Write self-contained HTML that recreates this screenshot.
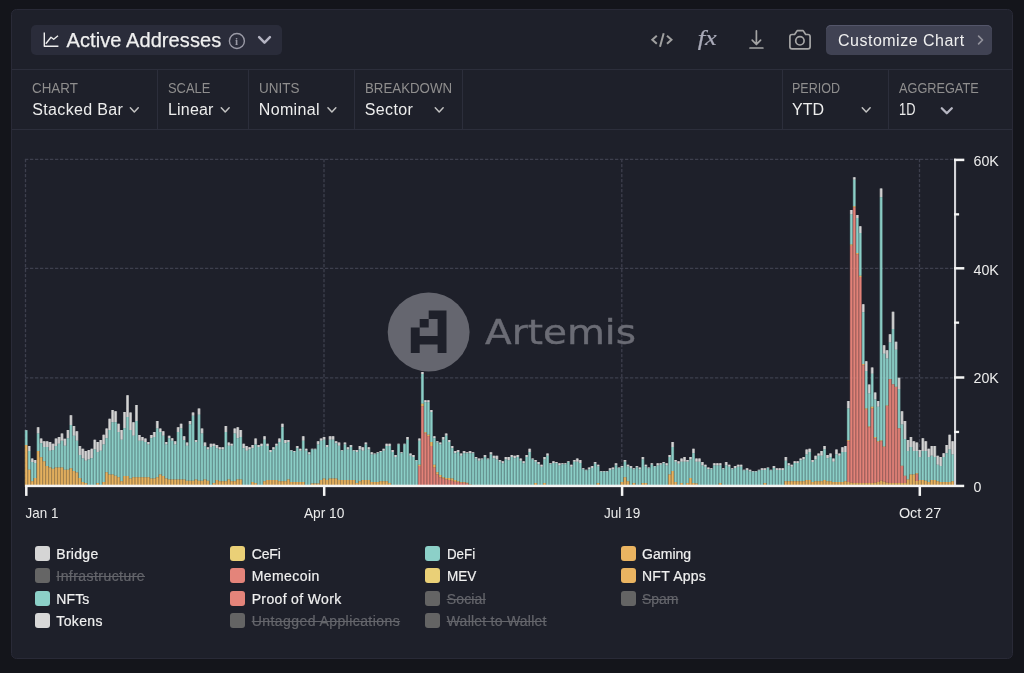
<!DOCTYPE html>
<html lang="en"><head><meta charset="utf-8"><title>Active Addresses</title>
<style>
html,body{margin:0;padding:0}
body{width:1024px;height:673px;overflow:hidden;background:#14151b;font-family:"Liberation Sans",sans-serif;color:#ededed;position:relative}
.root{position:absolute;left:0;top:0;width:1024px;height:673px;will-change:transform;transform:translateZ(0)}
.card{position:absolute;left:10.7px;top:8.9px;width:1002.4px;height:650.1px;background:#1e202a;border:1.8px solid #292a37;border-radius:5.5px;box-sizing:border-box}
.hl{position:absolute;left:12.2px;width:999.4px;height:1px;background:#2c2e3b}
.vl{position:absolute;top:70px;height:59px;width:1px;background:#2c2e3b}
.pill{position:absolute;left:31px;top:25px;width:251px;height:30px;border-radius:5px;background:#2a2c3a}
.title{position:absolute;left:66.5px;top:28.3px;font-size:20px;line-height:24px;white-space:nowrap;color:#f0f0f0;-webkit-text-stroke:0.25px #f0f0f0}
.btn{position:absolute;left:826px;top:24.7px;width:166px;height:30px;border-radius:5px;background:#404253;box-shadow:inset 0 1px 0 #54566a;box-sizing:border-box}
.btnt{position:absolute;left:838px;top:30.5px;font-size:16px;line-height:19px;white-space:nowrap;color:#f0f0f0}
.lab{position:absolute;top:80px;font-size:14px;line-height:16px;color:#8f8e8e;white-space:nowrap}
.val{position:absolute;top:99.5px;font-size:16px;line-height:19px;color:#ededed;white-space:nowrap}
.fx{position:absolute;left:697px;top:26px;font-family:"Liberation Serif",serif;font-style:italic;font-size:22px;line-height:26px;color:#b4b4b4}
svg.chart,svg.icons{position:absolute;left:0;top:0}
.li{position:absolute;height:15px;white-space:nowrap}
.li i{position:absolute;left:0;top:0;width:15px;height:15px;border-radius:3px}
.li>span{position:absolute;left:21.5px;top:0.3px;font-size:14px;line-height:16px;color:#f0f0f0;-webkit-text-stroke:0.2px #f0f0f0}
.li.off>span{color:#64656b;text-decoration:line-through;-webkit-text-stroke:0.2px #64656b}
</style></head><body>
<div class="root">
<div class="card"></div>
<div class="hl" style="top:69px"></div><div class="hl" style="top:129px"></div>
<div class="vl" style="left:157px"></div><div class="vl" style="left:248px"></div><div class="vl" style="left:354px"></div><div class="vl" style="left:462px"></div><div class="vl" style="left:782px"></div><div class="vl" style="left:888px"></div>
<div class="pill"></div>
<div class="title"><span class="fit" style="letter-spacing:0.086px">Active Addresses</span></div>
<div class="btn"></div><div class="btnt"><span class="fit" style="letter-spacing:0.496px">Customize Chart</span></div>
<div class="lab" style="left:32.3px"><span class="fit" style="display:inline-block;transform-origin:0 50%;transform:scaleX(0.9548)">CHART</span></div><div class="val" style="left:32.3px"><span class="fit" style="letter-spacing:0.331px">Stacked Bar</span></div>
<div class="lab" style="left:168.0px"><span class="fit" style="display:inline-block;transform-origin:0 50%;transform:scaleX(0.9211)">SCALE</span></div><div class="val" style="left:168.0px"><span class="fit" style="letter-spacing:0.186px">Linear</span></div>
<div class="lab" style="left:258.8px"><span class="fit" style="display:inline-block;transform-origin:0 50%;transform:scaleX(0.9619)">UNITS</span></div><div class="val" style="left:258.8px"><span class="fit" style="letter-spacing:0.345px">Nominal</span></div>
<div class="lab" style="left:364.8px"><span class="fit" style="display:inline-block;transform-origin:0 50%;transform:scaleX(0.9488)">BREAKDOWN</span></div><div class="val" style="left:364.8px"><span class="fit" style="letter-spacing:0.342px">Sector</span></div>
<div class="lab" style="left:792.0px"><span class="fit" style="display:inline-block;transform-origin:0 50%;transform:scaleX(0.8959)">PERIOD</span></div><div class="val" style="left:792.0px"><span class="fit" style="letter-spacing:-0.033px">YTD</span></div>
<div class="lab" style="left:898.8px"><span class="fit" style="display:inline-block;transform-origin:0 50%;transform:scaleX(0.9092)">AGGREGATE</span></div><div class="val" style="left:898.8px"><span class="fit" style="display:inline-block;transform-origin:0 50%;transform:scaleX(0.8018)">1D</span></div>
<svg class="chart" width="1024" height="673" viewBox="0 0 1024 673">
<g stroke="#3d3f4d" stroke-width="1.3" stroke-dasharray="3.3 1.7" fill="none">
<path d="M25 159.4H955M25 268.4H955M25 377.9H955"/>
<path d="M25.5 159V485M324 159V485M621.8 159V485M919.5 159V485"/>
</g>
<g class="wm">
<ellipse cx="428.65" cy="332" rx="40.95" ry="39.4" fill="#65666f"/>
<path fill="#1e202a" d="M428.7 310.5h17.8v42.5h-8.9v-8.5h-17.9v8.5h-8.9v-25.5h8.9v-8.5h9zM428.7 319v8.500h-9v8.500h17.900v-17z"/>
<text x="485" y="343.8" font-family="DejaVu Sans,sans-serif" font-size="34" fill="#6b6c75" stroke="#6b6c75" stroke-width="0.4" textLength="151" lengthAdjust="spacingAndGlyphs">Artemis</text>
</g>
<g fill-opacity="0.66"><path fill="#d4d4d4" d="M24.75 429.95v0.54h2.98v-0.54zM27.73 446v4.99h2.98v-4.99zM30.71 458.49v3.57h2.98v-3.57zM33.69 459.91v3.03h2.98v-3.03zM36.66 427.27v6.24h2.98v-6.24zM39.64 438.51v4.82h2.98v-4.82zM42.62 441.18v5.71h2.98v-5.71zM45.6 441.18v5.71h2.98v-5.71zM48.58 442.08v8.74h2.98v-8.74zM51.56 443.68v6.24h2.98v-6.24zM54.54 438.51v7.49h2.98v-7.49zM57.52 437.08v6.6h2.98v-6.6zM60.49 433.51v7.14h2.98v-7.14zM63.47 438.87v6.78h2.98v-6.78zM66.45 429.95v8.38h2.98v-8.38zM69.43 415.14v9.81h2.98v-9.81zM72.41 426.02v9.81h2.98v-9.81zM75.39 431.2v9.45h2.98v-9.45zM78.37 446v8.92h2.98v-8.92zM81.35 448.68v9.81h2.98v-9.81zM84.32 451v9.81h2.98v-9.81zM87.3 450.1v9.28h2.98v-9.28zM90.28 448.68v9.45h2.98v-9.45zM93.26 439.76v9.81h2.98v-9.81zM96.24 442.08v9.81h2.98v-9.81zM99.22 440.11v10.7h2.98v-10.7zM102.2 434.76v9.81h2.98v-9.81zM105.17 428.52v9.81h2.98v-9.81zM108.15 418.71v11.24h2.98v-11.24zM111.13 409.97v12.31h2.98v-12.31zM114.11 411.22v11.06h2.98v-11.06zM117.09 423.7v8.38h2.98v-8.38zM120.07 429.95v9.81h2.98v-9.81zM123.05 412.11v16.05h2.98v-16.05zM126.03 395.16v21.94h2.98v-21.94zM129 412.47v17.48h2.98v-17.48zM131.98 422.28v13.56h2.98v-13.56zM134.96 404.97v16.05h2.98v-16.05zM137.94 434.94v5.71h2.98v-5.71zM140.92 437.08v3.57h2.98v-3.57zM143.9 438.51v3.57h2.98v-3.57zM146.88 442.08v2.5h2.98v-2.5zM149.86 434.94v3.39h2.98v-3.39zM152.83 432.09v4.99h2.98v-4.99zM155.81 421.03v7.49h2.98v-7.49zM158.79 428.52v3.57h2.98v-3.57zM161.77 431.2v4.64h2.98v-4.64zM164.75 442.08v2.5h2.98v-2.5zM167.73 435.83v2.5h2.98v-2.5zM170.71 438.33v2.32h2.98v-2.32zM173.69 441.18v3.39h2.98v-3.39zM176.66 427.27v4.82h2.98v-4.82zM179.64 423.7v4.82h2.98v-4.82zM182.62 436.19v3.92h2.98v-3.92zM185.6 442.43v3.21h2.98v-3.21zM188.58 421.03v3.57h2.98v-3.57zM191.56 412.47v3.21h2.98v-3.21zM194.54 440.11v1.96h2.98v-1.96zM197.51 408.54v6.24h2.98v-6.24zM200.49 428.52v4.99h2.98v-4.99zM203.47 442.43v3.57h2.98v-3.57zM206.45 447.25v2.32h2.98v-2.32zM209.43 443.68v3.21h2.98v-3.21zM212.41 443.68v2.32h2.98v-2.32zM215.39 445.11v3.03h2.98v-3.03zM218.37 447.25v2.32h2.98v-2.32zM221.34 447.25v2.32h2.98v-2.32zM224.32 426.02v6.06h2.98v-6.06zM227.3 442.43v3.21h2.98v-3.21zM230.28 443.68v1.96h2.98v-1.96zM233.26 428.52v4.99h2.98v-4.99zM236.24 427.27v11.06h2.98v-11.06zM239.22 429.95v7.14h2.98v-7.14zM242.2 443.68v4.46h2.98v-4.46zM245.17 446v4.82h2.98v-4.82zM248.15 447.25v2.32h2.98v-2.32zM251.13 445.11v3.03h2.98v-3.03zM254.11 438.51v6.06h2.98v-6.06zM257.09 445.11v1.78h2.98v-1.78zM260.07 443.68v2.32h2.98v-2.32zM263.05 436.19v3.57h2.98v-3.57zM266.02 443.68v2.32h2.98v-2.32zM269 450.1v1.78h2.98v-1.78zM271.98 447.25v2.32h2.98v-2.32zM274.96 443.68v1.96h2.98v-1.96zM277.94 438.51v3.57h2.98v-3.57zM280.92 423.7v3.57h2.98v-3.57zM283.9 440.11v3.21h2.98v-3.21zM286.88 440.11v1.96h2.98v-1.96zM289.85 450.1v0.71h2.98v-0.71zM292.83 451v0.89h2.98v-0.89zM295.81 446v2.14h2.98v-2.14zM298.79 448.68v2.14h2.98v-2.14zM301.77 436.19v4.46h2.98v-4.46zM304.75 448.68v2.14h2.98v-2.14zM307.73 452.24v2.14h2.98v-2.14zM310.71 448.68v0.89h2.98v-0.89zM313.68 448.68v0.89h2.98v-0.89zM316.66 441.18v3.39h2.98v-3.39zM319.64 438.51v2.14h2.98v-2.14zM322.62 437.08v2.68h2.98v-2.68zM325.6 445.11v1.78h2.98v-1.78zM328.58 436.19v3.57h2.98v-3.57zM331.56 436.19v3.57h2.98v-3.57zM334.53 441.18v2.14h2.98v-2.14zM337.51 442.43v3.21h2.98v-3.21zM340.49 450.1v0.71h2.98v-0.71zM343.47 442.43v2.14h2.98v-2.14zM346.45 447.25v2.32h2.98v-2.32zM349.43 445.11v1.78h2.98v-1.78zM352.41 450.1v0.71h2.98v-0.71zM355.39 450.1v1.78h2.98v-1.78zM358.36 446v3.57h2.98v-3.57zM361.34 447.25v3.57h2.98v-3.57zM364.32 442.43v2.14h2.98v-2.14zM367.3 447.25v2.32h2.98v-2.32zM370.28 452.24v2.14h2.98v-2.14zM373.26 453.49v0.89h2.98v-0.89zM376.24 452.24v0.89h2.98v-0.89zM379.22 451v0.89h2.98v-0.89zM382.19 448.68v2.14h2.98v-2.14zM385.17 443.68v2.32h2.98v-2.32zM388.15 443.68v2.32h2.98v-2.32zM391.13 450.1v1.78h2.98v-1.78zM394.11 454.92v2.14h2.98v-2.14zM397.09 443.68v0.89h2.98v-0.89zM400.07 452.24v0.89h2.98v-0.89zM403.04 443.68v0.89h2.98v-0.89zM406.02 437.08v2.68h2.98v-2.68zM409 453.49v2.32h2.98v-2.32zM411.98 454.92v2.14h2.98v-2.14zM414.96 459.91v0.89h2.98v-0.89zM417.94 438.51v2.14h2.98v-2.14zM420.92 371.97v2.14h2.98v-2.14zM423.9 400.16v2.14h2.98v-2.14zM426.87 400.16v2.14h2.98v-2.14zM429.85 409.97v2.14h2.98v-2.14zM432.83 436.19v2.14h2.98v-2.14zM435.81 441.18v1.25h2.98v-1.25zM438.79 442.43v2.14h2.98v-2.14zM441.77 437.08v2.68h2.98v-2.68zM444.75 433.51v2.32h2.98v-2.32zM447.73 440.11v1.96h2.98v-1.96zM450.7 446v2.14h2.98v-2.14zM453.68 451v2.14h2.98v-2.14zM456.66 450.1v1.78h2.98v-1.78zM459.64 453.49v2.32h2.98v-2.32zM462.62 451v2.14h2.98v-2.14zM465.6 452.24v0.89h2.98v-0.89zM468.58 451v2.14h2.98v-2.14zM471.56 452.24v0.89h2.98v-0.89zM474.53 457.06v1.43h2.98v-1.43zM477.51 458.49v2.32h2.98v-2.32zM480.49 458.49v0.89h2.98v-0.89zM483.47 454.92v2.14h2.98v-2.14zM486.45 458.49v0.89h2.98v-0.89zM489.43 452.24v2.14h2.98v-2.14zM492.41 455.81v2.32h2.98v-2.32zM495.38 455.81v3.57h2.98v-3.57zM498.36 459.91v1.78h2.98v-1.78zM501.34 461.16v2.14h2.98v-2.14zM504.32 457.06v2.32h2.98v-2.32zM507.3 457.06v3.21h2.98v-3.21zM510.28 454.92v2.14h2.98v-2.14zM513.26 455.81v2.32h2.98v-2.32zM516.24 454.92v2.14h2.98v-2.14zM519.21 458.49v2.32h2.98v-2.32zM522.19 461.16v2.14h2.98v-2.14zM525.17 454.92v2.14h2.98v-2.14zM528.15 448.68v3.21h2.98v-3.21zM531.13 458.49v0.89h2.98v-0.89zM534.11 459.91v1.78h2.98v-1.78zM537.09 462.05v2.14h2.98v-2.14zM540.07 464.73v2.14h2.98v-2.14zM543.04 457.06v2.32h2.98v-2.32zM546.02 453.49v2.32h2.98v-2.32zM549 463.3v0.89h2.98v-0.89zM551.98 461.16v1.78h2.98v-1.78zM554.96 462.05v1.25h2.98v-1.25zM557.94 463.3v2.32h2.98v-2.32zM560.92 463.3v0.89h2.98v-0.89zM563.89 463.3v0.89h2.98v-0.89zM566.87 461.16v0.89h2.98v-0.89zM569.85 464.73v2.14h2.98v-2.14zM572.83 459.91v1.78h2.98v-1.78zM575.81 458.49v3.21h2.98v-3.21zM578.79 459.91v3.03h2.98v-3.03zM581.77 468.3v0.89h2.98v-0.89zM584.75 469.73v0.89h2.98v-0.89zM587.72 467.41v1.78h2.98v-1.78zM590.7 465.98v1.96h2.98v-1.96zM593.68 462.05v1.78h2.98v-1.78zM596.66 464.73v1.78h2.98v-1.78zM599.64 470.97v0.89h2.98v-0.89zM602.62 470.97v0.89h2.98v-0.89zM605.6 470.97v0.89h2.98v-0.89zM608.58 468.3v1.78h2.98v-1.78zM611.55 467.41v1.78h2.98v-1.78zM614.53 463.3v2.32h2.98v-2.32zM617.51 467.41v0.54h2.98v-0.54zM620.49 465.98v1.43h2.98v-1.43zM623.47 459.91v1.78h2.98v-1.78zM626.45 464.73v1.78h2.98v-1.78zM629.43 465.98v1.96h2.98v-1.96zM632.4 468.3v0.89h2.98v-0.89zM635.38 465.98v1.43h2.98v-1.43zM638.36 467.41v1.78h2.98v-1.78zM641.34 457.06v2.32h2.98v-2.32zM644.32 464.73v1.78h2.98v-1.78zM647.3 467.41v0.89h2.98v-0.89zM650.28 463.3v1.43h2.98v-1.43zM653.26 465.98v0.89h2.98v-0.89zM656.23 463.3v2.32h2.98v-2.32zM659.21 463.3v1.43h2.98v-1.43zM662.19 462.05v1.25h2.98v-1.25zM665.17 463.3v2.32h2.98v-2.32zM668.15 454.92v2.14h2.98v-2.14zM671.13 442.08v4.82h2.98v-4.82zM674.11 459.91v1.78h2.98v-1.78zM677.09 461.16v2.68h2.98v-2.68zM680.06 458.49v3.21h2.98v-3.21zM683.04 457.06v4.64h2.98v-4.64zM686.02 459.91v1.78h2.98v-1.78zM689 457.06v2.32h2.98v-2.32zM691.98 448.68v4.46h2.98v-4.46zM694.96 458.49v3.21h2.98v-3.21zM697.94 458.49v3.21h2.98v-3.21zM700.91 462.05v3.57h2.98v-3.57zM703.89 464.73v2.14h2.98v-2.14zM706.87 467.41v1.78h2.98v-1.78zM709.85 468.3v0.89h2.98v-0.89zM712.83 463.3v2.32h2.98v-2.32zM715.81 463.3v2.32h2.98v-2.32zM718.79 463.3v2.32h2.98v-2.32zM721.77 468.3v0.89h2.98v-0.89zM724.74 462.05v3.57h2.98v-3.57zM727.72 464.73v2.14h2.98v-2.14zM730.7 468.3v0.89h2.98v-0.89zM733.68 465.98v1.96h2.98v-1.96zM736.66 464.73v2.14h2.98v-2.14zM739.64 464.73v2.14h2.98v-2.14zM742.62 469.73v0.89h2.98v-0.89zM745.6 468.3v1.78h2.98v-1.78zM748.57 469.73v1.78h2.98v-1.78zM751.55 470.97v0.89h2.98v-0.89zM754.53 470.97v0.89h2.98v-0.89zM757.51 469.73v0.89h2.98v-0.89zM760.49 468.3v1.78h2.98v-1.78zM763.47 468.3v1.78h2.98v-1.78zM766.45 467.41v0.54h2.98v-0.54zM769.42 469.73v0.89h2.98v-0.89zM772.4 465.98v1.96h2.98v-1.96zM775.38 468.3v1.78h2.98v-1.78zM778.36 468.3v1.78h2.98v-1.78zM781.34 468.3v1.78h2.98v-1.78zM784.32 457.06v3.75h2.98v-3.75zM787.3 463.3v2.32h2.98v-2.32zM790.28 464.73v2.14h2.98v-2.14zM793.25 461.16v1.78h2.98v-1.78zM796.23 461.16v1.78h2.98v-1.78zM799.21 458.49v1.78h2.98v-1.78zM802.19 457.06v2.32h2.98v-2.32zM805.17 449.57v4.82h2.98v-4.82zM808.15 448.68v3.21h2.98v-3.21zM811.13 459.91v2.14h2.98v-2.14zM814.11 455.81v3.57h2.98v-3.57zM817.08 453.49v2.32h2.98v-2.32zM820.06 451v4.82h2.98v-4.82zM823.04 446v3.57h2.98v-3.57zM826.02 454.92v3.21h2.98v-3.21zM829 453.49v3.57h2.98v-3.57zM831.98 458.49v3.21h2.98v-3.21zM834.96 449.57v4.82h2.98v-4.82zM837.94 453.49v2.32h2.98v-2.32zM840.91 447.25v4.64h2.98v-4.64zM843.89 446v5.89h2.98v-5.89zM846.87 401v7.5h2.98v-7.5zM849.85 210.1v4.5h2.98v-4.5zM852.83 177.3v2.5h2.98v-2.5zM855.81 215.1v3h2.98v-3zM858.79 226.2v6.7h2.98v-6.7zM861.76 304.2v8.1h2.98v-8.1zM864.74 361.3v9.8h2.98v-9.8zM867.72 384.5v8.9h2.98v-8.9zM870.7 367.6v6.2h2.98v-6.2zM873.68 392.5v7.1h2.98v-7.1zM876.66 401v5.8h2.98v-5.8zM879.64 188.4v8.9h2.98v-8.9zM882.62 345.3v8.4h2.98v-8.4zM885.59 350.3v8.3h2.98v-8.3zM888.57 334.2v8.4h2.98v-8.4zM891.55 311.7v17.2h2.98v-17.2zM894.53 341.7v8h2.98v-8zM897.51 377.7v11.2h2.98v-11.2zM900.49 411.2v13.4h2.98v-13.4zM903.47 421v17.9h2.98v-17.9zM906.45 440.11v10.88h2.98v-10.88zM909.42 437.08v9.81h2.98v-9.81zM912.4 441.18v9.81h2.98v-9.81zM915.38 442.4v8.6h2.98v-8.6zM918.36 450.1v6.96h2.98v-6.96zM921.34 438.33v12.67h2.98v-12.67zM924.32 441.18v9.81h2.98v-9.81zM927.3 448.68v8.38h2.98v-8.38zM930.27 446v9.81h2.98v-9.81zM933.25 446v11.06h2.98v-11.06zM936.23 455.81v8.92h2.98v-8.92zM939.21 457.06v8.92h2.98v-8.92zM942.19 453.14v3.92h2.98v-3.92zM945.17 445.11v8.03h2.98v-8.03zM948.15 434.76v14.81h2.98v-14.81zM951.13 441.18v13.2h2.98v-13.2z"/><path fill="#8bcfc7" d="M24.75 430.48v14.63h2.98v-14.63zM27.73 451v18.73h2.98v-18.73zM30.71 462.05v19.09h2.98v-19.09zM33.69 462.95v15.16h2.98v-15.16zM36.66 433.51v17.48h2.98v-17.48zM39.64 443.33v13.91h2.98v-13.91zM42.62 446.89v14.27h2.98v-14.27zM45.6 446.89v19.09h2.98v-19.09zM48.58 450.82v16.59h2.98v-16.59zM51.56 449.93v18.73h2.98v-18.73zM54.54 446v21.41h2.98v-21.41zM57.52 443.68v23.72h2.98v-23.72zM60.49 440.65v26.76h2.98v-26.76zM63.47 445.64v24.08h2.98v-24.08zM66.45 438.33v31.39h2.98v-31.39zM69.43 424.95v43.35h2.98v-43.35zM72.41 435.83v35.14h2.98v-35.14zM75.39 440.65v31.75h2.98v-31.75zM78.37 454.92v23.19h2.98v-23.19zM81.35 458.49v23.55h2.98v-23.55zM84.32 460.81v22.3h2.98v-22.3zM87.3 459.38v27.65h2.98v-27.65zM90.28 458.13v28.9h2.98v-28.9zM93.26 449.57v37.46h2.98v-37.46zM96.24 451.89v31.22h2.98v-31.22zM99.22 450.82v36.21h2.98v-36.21zM102.2 444.57v37.46h2.98v-37.46zM105.17 438.33v33.89h2.98v-33.89zM108.15 429.95v44.6h2.98v-44.6zM111.13 422.28v52.27h2.98v-52.27zM114.11 422.28v53.51h2.98v-53.51zM117.09 432.09v45.13h2.98v-45.13zM120.07 439.76v41.38h2.98v-41.38zM123.05 428.16v47.81h2.98v-47.81zM126.03 417.1v58.87h2.98v-58.87zM129 429.95v48.52h2.98v-48.52zM131.98 435.83v41.38h2.98v-41.38zM134.96 421.03v56.19h2.98v-56.19zM137.94 440.65v36.57h2.98v-36.57zM140.92 440.65v36.57h2.98v-36.57zM143.9 442.08v35.14h2.98v-35.14zM146.88 444.57v32.64h2.98v-32.64zM149.86 438.33v40.14h2.98v-40.14zM152.83 437.08v41.38h2.98v-41.38zM155.81 428.52v48.7h2.98v-48.7zM158.79 432.09v42.45h2.98v-42.45zM161.77 435.83v40.14h2.98v-40.14zM164.75 444.57v33.89h2.98v-33.89zM167.73 438.33v41.21h2.98v-41.21zM170.71 440.65v38.89h2.98v-38.89zM173.69 444.57v34.96h2.98v-34.96zM176.66 432.09v47.45h2.98v-47.45zM179.64 428.52v51.02h2.98v-51.02zM182.62 440.11v39.42h2.98v-39.42zM185.6 445.64v35.14h2.98v-35.14zM188.58 424.6v56.19h2.98v-56.19zM191.56 415.68v65.11h2.98v-65.11zM194.54 442.08v37.46h2.98v-37.46zM197.51 414.78v66h2.98v-66zM200.49 433.51v47.27h2.98v-47.27zM203.47 446v33.54h2.98v-33.54zM206.45 449.57v31.22h2.98v-31.22zM209.43 446.89v40.14h2.98v-40.14zM212.41 446v37.1h2.98v-37.1zM215.39 448.14v31.75h2.98v-31.75zM218.37 449.57v31.57h2.98v-31.57zM221.34 449.57v31.57h2.98v-31.57zM224.32 432.09v49.05h2.98v-49.05zM227.3 445.64v33.89h2.98v-33.89zM230.28 445.64v35.5h2.98v-35.5zM233.26 433.51v47.63h2.98v-47.63zM236.24 438.33v41.21h2.98v-41.21zM239.22 437.08v42.45h2.98v-42.45zM242.2 448.14v38.89h2.98v-38.89zM245.17 450.82v36.21h2.98v-36.21zM248.15 449.57v37.46h2.98v-37.46zM251.13 448.14v33.89h2.98v-33.89zM254.11 444.57v38.53h2.98v-38.53zM257.09 446.89v40.14h2.98v-40.14zM260.07 446v41.03h2.98v-41.03zM263.05 439.76v41.38h2.98v-41.38zM266.02 446v33.89h2.98v-33.89zM269 451.89v28.01h2.98v-28.01zM271.98 449.57v30.32h2.98v-30.32zM274.96 445.64v34.25h2.98v-34.25zM277.94 442.08v39.07h2.98v-39.07zM280.92 427.27v53.87h2.98v-53.87zM283.9 443.33v37.82h2.98v-37.82zM286.88 442.08v37.46h2.98v-37.46zM289.85 450.82v31.22h2.98v-31.22zM292.83 451.89v30.15h2.98v-30.15zM295.81 448.14v33.89h2.98v-33.89zM298.79 450.82v31.22h2.98v-31.22zM301.77 440.65v41.38h2.98v-41.38zM304.75 450.82v36.21h2.98v-36.21zM307.73 454.38v32.64h2.98v-32.64zM310.71 449.57v33.89h2.98v-33.89zM313.68 449.57v33.89h2.98v-33.89zM316.66 444.57v38.89h2.98v-38.89zM319.64 440.65v39.24h2.98v-39.24zM322.62 439.76v38.71h2.98v-38.71zM325.6 446.89v33h2.98v-33zM328.58 439.76v38.71h2.98v-38.71zM331.56 439.76v38.71h2.98v-38.71zM334.53 443.33v35.14h2.98v-35.14zM337.51 445.64v34.25h2.98v-34.25zM340.49 450.82v29.08h2.98v-29.08zM343.47 444.57v35.32h2.98v-35.32zM346.45 449.57v30.32h2.98v-30.32zM349.43 446.89v33h2.98v-33zM352.41 450.82v29.08h2.98v-29.08zM355.39 451.89v31.22h2.98v-31.22zM358.36 449.57v31.57h2.98v-31.57zM361.34 450.82v29.08h2.98v-29.08zM364.32 444.57v35.32h2.98v-35.32zM367.3 449.57v30.32h2.98v-30.32zM370.28 454.38v27.65h2.98v-27.65zM373.26 454.38v27.65h2.98v-27.65zM376.24 453.14v28.9h2.98v-28.9zM379.22 451.89v29.25h2.98v-29.25zM382.19 450.82v30.32h2.98v-30.32zM385.17 446v35.14h2.98v-35.14zM388.15 446v37.1h2.98v-37.1zM391.13 451.89v35.14h2.98v-35.14zM394.11 457.06v29.97h2.98v-29.97zM397.09 444.57v42.45h2.98v-42.45zM400.07 453.14v33.89h2.98v-33.89zM403.04 444.57v42.45h2.98v-42.45zM406.02 439.76v47.27h2.98v-47.27zM409 455.81v31.22h2.98v-31.22zM411.98 457.06v29.97h2.98v-29.97zM414.96 460.81v26.22h2.98v-26.22zM417.94 440.65v24.08h2.98v-24.08zM420.92 374.11v29.61h2.98v-29.61zM423.9 402.3v29.97h2.98v-29.97zM426.87 402.3v32.47h2.98v-32.47zM429.85 412.11v29.97h2.98v-29.97zM432.83 438.33v26.4h2.98v-26.4zM435.81 442.43v29.79h2.98v-29.79zM438.79 444.57v30.32h2.98v-30.32zM441.77 439.76v37.46h2.98v-37.46zM444.75 435.83v42.28h2.98v-42.28zM447.73 442.08v36.03h2.98v-36.03zM450.7 448.14v30.32h2.98v-30.32zM453.68 453.14v26.76h2.98v-26.76zM456.66 451.89v29.25h2.98v-29.25zM459.64 455.81v26.22h2.98v-26.22zM462.62 453.14v28.9h2.98v-28.9zM465.6 453.14v29.61h2.98v-29.61zM468.58 453.14v31.39h2.98v-31.39zM471.56 453.14v31.75h2.98v-31.75zM474.53 458.49v26.76h2.98v-26.76zM477.51 460.81v24.79h2.98v-24.79zM480.49 459.38v26.22h2.98v-26.22zM483.47 457.06v28.54h2.98v-28.54zM486.45 459.38v26.58h2.98v-26.58zM489.43 454.38v31.57h2.98v-31.57zM492.41 458.13v28.9h2.98v-28.9zM495.38 459.38v27.65h2.98v-27.65zM498.36 461.7v25.33h2.98v-25.33zM501.34 463.3v23.72h2.98v-23.72zM504.32 459.38v27.65h2.98v-27.65zM507.3 460.27v26.76h2.98v-26.76zM510.28 457.06v29.97h2.98v-29.97zM513.26 458.13v28.9h2.98v-28.9zM516.24 457.06v29.97h2.98v-29.97zM519.21 460.81v26.22h2.98v-26.22zM522.19 463.3v23.72h2.98v-23.72zM525.17 457.06v29.97h2.98v-29.97zM528.15 451.89v35.14h2.98v-35.14zM531.13 459.38v27.65h2.98v-27.65zM534.11 461.7v21.41h2.98v-21.41zM537.09 464.2v22.83h2.98v-22.83zM540.07 466.87v20.16h2.98v-20.16zM543.04 459.38v23.72h2.98v-23.72zM546.02 455.81v31.22h2.98v-31.22zM549 464.2v22.83h2.98v-22.83zM551.98 462.95v24.08h2.98v-24.08zM554.96 463.3v23.72h2.98v-23.72zM557.94 465.62v21.41h2.98v-21.41zM560.92 464.2v22.83h2.98v-22.83zM563.89 464.2v22.83h2.98v-22.83zM566.87 462.05v24.97h2.98v-24.97zM569.85 466.87v20.16h2.98v-20.16zM572.83 461.7v25.33h2.98v-25.33zM575.81 461.7v25.33h2.98v-25.33zM578.79 462.95v24.08h2.98v-24.08zM581.77 469.19v17.84h2.98v-17.84zM584.75 470.62v16.41h2.98v-16.41zM587.72 469.19v17.84h2.98v-17.84zM590.7 467.94v19.09h2.98v-19.09zM593.68 463.84v23.19h2.98v-23.19zM596.66 466.51v16.59h2.98v-16.59zM599.64 471.87v15.16h2.98v-15.16zM602.62 471.87v15.16h2.98v-15.16zM605.6 471.87v15.16h2.98v-15.16zM608.58 470.08v16.95h2.98v-16.95zM611.55 469.19v17.84h2.98v-17.84zM614.53 465.62v21.41h2.98v-21.41zM617.51 467.94v19.09h2.98v-19.09zM620.49 467.41v14.63h2.98v-14.63zM623.47 461.7v15.52h2.98v-15.52zM626.45 466.51v14.63h2.98v-14.63zM629.43 467.94v19.09h2.98v-19.09zM632.4 469.19v13.91h2.98v-13.91zM635.38 467.41v19.62h2.98v-19.62zM638.36 469.19v17.84h2.98v-17.84zM641.34 459.38v23.72h2.98v-23.72zM644.32 466.51v16.59h2.98v-16.59zM647.3 468.3v18.73h2.98v-18.73zM650.28 464.73v22.3h2.98v-22.3zM653.26 466.87v20.16h2.98v-20.16zM656.23 465.62v21.41h2.98v-21.41zM659.21 464.73v22.3h2.98v-22.3zM662.19 463.3v23.72h2.98v-23.72zM665.17 465.62v21.41h2.98v-21.41zM668.15 457.06v17.48h2.98v-17.48zM671.13 446.89v24.08h2.98v-24.08zM674.11 461.7v20.34h2.98v-20.34zM677.09 463.84v23.19h2.98v-23.19zM680.06 461.7v21.41h2.98v-21.41zM683.04 461.7v25.33h2.98v-25.33zM686.02 461.7v21.41h2.98v-21.41zM689 459.38v18.73h2.98v-18.73zM691.98 453.14v29.97h2.98v-29.97zM694.96 461.7v21.76h2.98v-21.76zM697.94 461.7v25.33h2.98v-25.33zM700.91 465.62v21.41h2.98v-21.41zM703.89 466.87v20.16h2.98v-20.16zM706.87 469.19v17.84h2.98v-17.84zM709.85 469.19v17.84h2.98v-17.84zM712.83 465.62v21.41h2.98v-21.41zM715.81 465.62v21.41h2.98v-21.41zM718.79 465.62v17.48h2.98v-17.48zM721.77 469.19v17.84h2.98v-17.84zM724.74 465.62v21.41h2.98v-21.41zM727.72 466.87v20.16h2.98v-20.16zM730.7 469.19v17.84h2.98v-17.84zM733.68 467.94v19.09h2.98v-19.09zM736.66 466.87v20.16h2.98v-20.16zM739.64 466.87v20.16h2.98v-20.16zM742.62 470.62v16.41h2.98v-16.41zM745.6 470.08v16.95h2.98v-16.95zM748.57 471.51v15.52h2.98v-15.52zM751.55 471.87v15.16h2.98v-15.16zM754.53 471.87v15.16h2.98v-15.16zM757.51 470.62v16.41h2.98v-16.41zM760.49 470.08v16.95h2.98v-16.95zM763.47 470.08v13.02h2.98v-13.02zM766.45 467.94v19.09h2.98v-19.09zM769.42 470.62v16.41h2.98v-16.41zM772.4 467.94v19.09h2.98v-19.09zM775.38 470.08v16.95h2.98v-16.95zM778.36 470.08v16.95h2.98v-16.95zM781.34 470.08v16.95h2.98v-16.95zM784.32 460.81v20.34h2.98v-20.34zM787.3 465.62v15.52h2.98v-15.52zM790.28 466.87v14.27h2.98v-14.27zM793.25 462.95v18.19h2.98v-18.19zM796.23 462.95v18.19h2.98v-18.19zM799.21 460.27v20.87h2.98v-20.87zM802.19 459.38v21.76h2.98v-21.76zM805.17 454.38v25.51h2.98v-25.51zM808.15 451.89v28.01h2.98v-28.01zM811.13 462.05v19.98h2.98v-19.98zM814.11 459.38v21.76h2.98v-21.76zM817.08 455.81v25.33h2.98v-25.33zM820.06 455.81v25.33h2.98v-25.33zM823.04 449.57v30.32h2.98v-30.32zM826.02 458.13v23.01h2.98v-23.01zM829 457.06v24.08h2.98v-24.08zM831.98 461.7v20.34h2.98v-20.34zM834.96 454.38v27.65h2.98v-27.65zM837.94 455.81v26.22h2.98v-26.22zM840.91 451.89v30.15h2.98v-30.15zM843.89 451.89v29.25h2.98v-29.25zM846.87 408.5v31.6h2.98v-31.6zM849.85 214.6v29.9h2.98v-29.9zM852.83 179.8v26.4h2.98v-26.4zM855.81 218.1v35h2.98v-35zM858.79 232.9v42.8h2.98v-42.8zM861.76 312.3v51.7h2.98v-51.7zM864.74 371.1v37.4h2.98v-37.4zM867.72 393.4v33h2.98v-33zM870.7 373.8v33h2.98v-33zM873.68 399.6v37.5h2.98v-37.5zM876.66 406.8v34.4h2.98v-34.4zM879.64 197.3v243.3h2.98v-243.3zM882.62 353.7v92.8h2.98v-92.8zM885.59 358.6v46.9h2.98v-46.9zM888.57 342.6v36.4h2.98v-36.4zM891.55 328.9v55.3h2.98v-55.3zM894.53 349.7v37.1h2.98v-37.1zM897.51 388.9v39.3h2.98v-39.3zM900.49 424.6v41.2h2.98v-41.2zM903.47 438.9v36.9h2.98v-36.9zM906.45 451v28.54h2.98v-28.54zM909.42 446.89v27.65h2.98v-27.65zM912.4 451v23.55h2.98v-23.55zM915.38 451v22.3h2.98v-22.3zM918.36 457.06v22.83h2.98v-22.83zM921.34 451v28.9h2.98v-28.9zM924.32 451v29.79h2.98v-29.79zM927.3 457.06v24.97h2.98v-24.97zM930.27 455.81v24.08h2.98v-24.08zM933.25 457.06v22.83h2.98v-22.83zM936.23 464.73v16.41h2.98v-16.41zM939.21 465.98v16.05h2.98v-16.05zM942.19 457.06v24.97h2.98v-24.97zM945.17 453.14v28.9h2.98v-28.9zM948.15 449.57v32.47h2.98v-32.47zM951.13 454.38v26.76h2.98v-26.76z"/><path fill="#e9b460" d="M24.75 445.11v41.89h2.98v-41.89zM27.73 469.73v17.27h2.98v-17.27zM30.71 481.14v5.86h2.98v-5.86zM33.69 478.11v8.89h2.98v-8.89zM36.66 451v36h2.98v-36zM39.64 457.24v29.76h2.98v-29.76zM42.62 461.16v25.84h2.98v-25.84zM45.6 465.98v21.02h2.98v-21.02zM48.58 467.41v19.59h2.98v-19.59zM51.56 468.66v18.34h2.98v-18.34zM54.54 467.41v19.59h2.98v-19.59zM57.52 467.41v19.59h2.98v-19.59zM60.49 467.41v19.59h2.98v-19.59zM63.47 469.73v17.27h2.98v-17.27zM66.45 469.73v17.27h2.98v-17.27zM69.43 468.3v18.7h2.98v-18.7zM72.41 470.97v16.03h2.98v-16.03zM75.39 472.4v14.6h2.98v-14.6zM78.37 478.11v8.89h2.98v-8.89zM81.35 482.03v4.97h2.98v-4.97zM84.32 483.1v3.9h2.98v-3.9zM96.24 483.1v3.9h2.98v-3.9zM102.2 482.03v4.97h2.98v-4.97zM105.17 472.22v14.78h2.98v-14.78zM108.15 474.54v12.46h2.98v-12.46zM111.13 474.54v12.46h2.98v-12.46zM114.11 475.79v11.21h2.98v-11.21zM117.09 477.22v9.78h2.98v-9.78zM120.07 481.14v5.86h2.98v-5.86zM123.05 475.97v11.03h2.98v-11.03zM126.03 475.97v11.03h2.98v-11.03zM129 478.47v8.53h2.98v-8.53zM131.98 477.22v9.78h2.98v-9.78zM134.96 477.22v9.78h2.98v-9.78zM137.94 477.22v9.78h2.98v-9.78zM140.92 477.22v9.78h2.98v-9.78zM143.9 477.22v9.78h2.98v-9.78zM146.88 477.22v9.78h2.98v-9.78zM149.86 478.47v8.53h2.98v-8.53zM152.83 478.47v8.53h2.98v-8.53zM155.81 477.22v9.78h2.98v-9.78zM158.79 474.54v12.46h2.98v-12.46zM161.77 475.97v11.03h2.98v-11.03zM164.75 478.47v8.53h2.98v-8.53zM167.73 479.54v7.46h2.98v-7.46zM170.71 479.54v7.46h2.98v-7.46zM173.69 479.54v7.46h2.98v-7.46zM176.66 479.54v7.46h2.98v-7.46zM179.64 479.54v7.46h2.98v-7.46zM182.62 479.54v7.46h2.98v-7.46zM185.6 480.78v6.22h2.98v-6.22zM188.58 480.78v6.22h2.98v-6.22zM191.56 480.78v6.22h2.98v-6.22zM194.54 479.54v7.46h2.98v-7.46zM197.51 480.78v6.22h2.98v-6.22zM200.49 480.78v6.22h2.98v-6.22zM203.47 479.54v7.46h2.98v-7.46zM206.45 480.78v6.22h2.98v-6.22zM212.41 483.1v3.9h2.98v-3.9zM215.39 479.89v7.11h2.98v-7.11zM218.37 481.14v5.86h2.98v-5.86zM221.34 481.14v5.86h2.98v-5.86zM224.32 481.14v5.86h2.98v-5.86zM227.3 479.54v7.46h2.98v-7.46zM230.28 481.14v5.86h2.98v-5.86zM233.26 481.14v5.86h2.98v-5.86zM236.24 479.54v7.46h2.98v-7.46zM239.22 479.54v7.46h2.98v-7.46zM251.13 482.03v4.97h2.98v-4.97zM254.11 483.1v3.9h2.98v-3.9zM263.05 481.14v5.86h2.98v-5.86zM266.02 479.89v7.11h2.98v-7.11zM269 479.89v7.11h2.98v-7.11zM271.98 479.89v7.11h2.98v-7.11zM274.96 479.89v7.11h2.98v-7.11zM277.94 481.14v5.86h2.98v-5.86zM280.92 481.14v5.86h2.98v-5.86zM283.9 481.14v5.86h2.98v-5.86zM286.88 479.54v7.46h2.98v-7.46zM289.85 482.03v4.97h2.98v-4.97zM292.83 482.03v4.97h2.98v-4.97zM295.81 482.03v4.97h2.98v-4.97zM298.79 482.03v4.97h2.98v-4.97zM301.77 482.03v4.97h2.98v-4.97zM310.71 483.46v3.54h2.98v-3.54zM313.68 483.46v3.54h2.98v-3.54zM316.66 483.46v3.54h2.98v-3.54zM319.64 479.89v7.11h2.98v-7.11zM322.62 478.47v8.53h2.98v-8.53zM325.6 479.89v7.11h2.98v-7.11zM328.58 478.47v8.53h2.98v-8.53zM331.56 478.47v8.53h2.98v-8.53zM334.53 478.47v8.53h2.98v-8.53zM337.51 479.89v7.11h2.98v-7.11zM340.49 479.89v7.11h2.98v-7.11zM343.47 479.89v7.11h2.98v-7.11zM346.45 479.89v7.11h2.98v-7.11zM349.43 479.89v7.11h2.98v-7.11zM352.41 479.89v7.11h2.98v-7.11zM355.39 483.1v3.9h2.98v-3.9zM358.36 481.14v5.86h2.98v-5.86zM361.34 479.89v7.11h2.98v-7.11zM364.32 479.89v7.11h2.98v-7.11zM367.3 479.89v7.11h2.98v-7.11zM370.28 482.03v4.97h2.98v-4.97zM373.26 482.03v4.97h2.98v-4.97zM376.24 482.03v4.97h2.98v-4.97zM379.22 481.14v5.86h2.98v-5.86zM382.19 481.14v5.86h2.98v-5.86zM385.17 481.14v5.86h2.98v-5.86zM388.15 483.1v3.9h2.98v-3.9zM417.94 464.73v1.25h2.98v-1.25zM420.92 403.72v2.5h2.98v-2.5zM423.9 432.27v1.25h2.98v-1.25zM426.87 434.76v1.43h2.98v-1.43zM429.85 442.08v3.92h2.98v-3.92zM432.83 464.73v2.68h2.98v-2.68zM435.81 472.22v2.32h2.98v-2.32zM438.79 474.9v2.32h2.98v-2.32zM441.77 477.22v1.25h2.98v-1.25zM444.75 478.11v1.43h2.98v-1.43zM447.73 478.11v1.78h2.98v-1.78zM450.7 478.47v2.32h2.98v-2.32zM453.68 479.89v1.78h2.98v-1.78zM456.66 481.14v0.89h2.98v-0.89zM459.64 482.03v0.71h2.98v-0.71zM462.62 482.03v0.71h2.98v-0.71zM465.6 482.75v0.71h2.98v-0.71zM468.58 484.53v2.47h2.98v-2.47zM471.56 484.89v2.11h2.98v-2.11zM474.53 485.24v1.76h2.98v-1.76zM477.51 485.6v1.4h2.98v-1.4zM480.49 485.6v1.4h2.98v-1.4zM483.47 485.6v1.4h2.98v-1.4zM486.45 485.96v1.04h2.98v-1.04zM489.43 485.96v1.04h2.98v-1.04zM534.11 483.1v3.9h2.98v-3.9zM543.04 483.1v3.9h2.98v-3.9zM596.66 483.1v3.9h2.98v-3.9zM620.49 482.03v4.97h2.98v-4.97zM623.47 477.22v9.78h2.98v-9.78zM626.45 481.14v5.86h2.98v-5.86zM632.4 483.1v3.9h2.98v-3.9zM641.34 483.1v3.9h2.98v-3.9zM644.32 483.1v3.9h2.98v-3.9zM668.15 474.54v12.46h2.98v-12.46zM671.13 470.97v16.03h2.98v-16.03zM674.11 482.03v4.97h2.98v-4.97zM680.06 483.1v3.9h2.98v-3.9zM686.02 483.1v3.9h2.98v-3.9zM689 478.11v8.89h2.98v-8.89zM691.98 483.1v3.9h2.98v-3.9zM694.96 483.46v3.54h2.98v-3.54zM718.79 483.1v3.9h2.98v-3.9zM763.47 483.1v3.9h2.98v-3.9zM784.32 481.14v5.86h2.98v-5.86zM787.3 481.14v5.86h2.98v-5.86zM790.28 481.14v5.86h2.98v-5.86zM793.25 481.14v5.86h2.98v-5.86zM796.23 481.14v5.86h2.98v-5.86zM799.21 481.14v5.86h2.98v-5.86zM802.19 481.14v5.86h2.98v-5.86zM805.17 479.89v7.11h2.98v-7.11zM808.15 479.89v7.11h2.98v-7.11zM811.13 482.03v4.97h2.98v-4.97zM814.11 481.14v5.86h2.98v-5.86zM817.08 481.14v5.86h2.98v-5.86zM820.06 481.14v5.86h2.98v-5.86zM823.04 479.89v7.11h2.98v-7.11zM826.02 481.14v5.86h2.98v-5.86zM829 481.14v5.86h2.98v-5.86zM831.98 482.03v4.97h2.98v-4.97zM834.96 482.03v4.97h2.98v-4.97zM837.94 482.03v4.97h2.98v-4.97zM840.91 482.03v4.97h2.98v-4.97zM843.89 481.14v5.86h2.98v-5.86zM846.87 440.1v1.1h2.98v-1.1zM846.87 482v5h2.98v-5zM849.85 244.5v1.3h2.98v-1.3zM849.85 482.5v4.5h2.98v-4.5zM852.83 206.2v1.2h2.98v-1.2zM852.83 483v4h2.98v-4zM855.81 253.1v1.3h2.98v-1.3zM855.81 483v4h2.98v-4zM858.79 275.7v1.3h2.98v-1.3zM858.79 483v4h2.98v-4zM861.76 364v1.3h2.98v-1.3zM861.76 483v4h2.98v-4zM864.74 408.5v1.3h2.98v-1.3zM864.74 483v4h2.98v-4zM867.72 426.4v0.9h2.98v-0.9zM867.72 483v4h2.98v-4zM870.7 406.8v1.7h2.98v-1.7zM870.7 483v4h2.98v-4zM873.68 437.1v1.2h2.98v-1.2zM873.68 482.5v4.5h2.98v-4.5zM876.66 441.2v0.9h2.98v-0.9zM876.66 482v5h2.98v-5zM879.64 440.6v0.6h2.98v-0.6zM879.64 480.5v6.5h2.98v-6.5zM882.62 446.5v0.4h2.98v-0.4zM882.62 481.5v5.5h2.98v-5.5zM885.59 405.5v0.4h2.98v-0.4zM885.59 482.5v4.5h2.98v-4.5zM888.57 379v0.2h2.98v-0.2zM888.57 483v4h2.98v-4zM891.55 384.2v0.3h2.98v-0.3zM891.55 483v4h2.98v-4zM894.53 386.8v0.3h2.98v-0.3zM894.53 483v4h2.98v-4zM897.51 428.2v0.3h2.98v-0.3zM897.51 483v4h2.98v-4zM900.49 465.8v0.2h2.98v-0.2zM900.49 483v4h2.98v-4zM903.47 475.8v0.2h2.98v-0.2zM903.47 483v4h2.98v-4zM906.45 479.54v7.46h2.98v-7.46zM909.42 474.54v12.46h2.98v-12.46zM912.4 474.54v12.46h2.98v-12.46zM915.38 473.3v1.2h2.98v-1.2zM915.38 481.1v5.9h2.98v-5.9zM918.36 479.89v7.11h2.98v-7.11zM921.34 479.89v7.11h2.98v-7.11zM924.32 480.78v6.22h2.98v-6.22zM927.3 482.03v4.97h2.98v-4.97zM930.27 479.89v7.11h2.98v-7.11zM933.25 479.89v7.11h2.98v-7.11zM936.23 481.14v5.86h2.98v-5.86zM939.21 482.03v4.97h2.98v-4.97zM942.19 482.03v4.97h2.98v-4.97zM945.17 482.03v4.97h2.98v-4.97zM948.15 482.03v4.97h2.98v-4.97zM951.13 481.14v5.86h2.98v-5.86z"/><path fill="#e38278" d="M417.94 465.98v21.02h2.98v-21.02zM420.92 406.22v80.78h2.98v-80.78zM423.9 433.51v53.49h2.98v-53.49zM426.87 436.19v50.81h2.98v-50.81zM429.85 446v41h2.98v-41zM432.83 467.41v19.59h2.98v-19.59zM435.81 474.54v12.46h2.98v-12.46zM438.79 477.22v9.78h2.98v-9.78zM441.77 478.47v8.53h2.98v-8.53zM444.75 479.54v7.46h2.98v-7.46zM447.73 479.89v7.11h2.98v-7.11zM450.7 480.78v6.22h2.98v-6.22zM453.68 481.68v5.32h2.98v-5.32zM456.66 482.03v4.97h2.98v-4.97zM459.64 482.75v4.25h2.98v-4.25zM462.62 482.75v4.25h2.98v-4.25zM465.6 483.46v3.54h2.98v-3.54zM846.87 441.2v40.8h2.98v-40.8zM849.85 245.8v236.7h2.98v-236.7zM852.83 207.4v275.6h2.98v-275.6zM855.81 254.4v228.6h2.98v-228.6zM858.79 277v206h2.98v-206zM861.76 365.3v117.7h2.98v-117.7zM864.74 409.8v73.2h2.98v-73.2zM867.72 427.3v55.7h2.98v-55.7zM870.7 408.5v74.5h2.98v-74.5zM873.68 438.3v44.2h2.98v-44.2zM876.66 442.1v39.9h2.98v-39.9zM879.64 441.2v39.3h2.98v-39.3zM882.62 446.9v34.6h2.98v-34.6zM885.59 405.9v76.6h2.98v-76.6zM888.57 379.2v103.8h2.98v-103.8zM891.55 384.5v98.5h2.98v-98.5zM894.53 387.1v95.9h2.98v-95.9zM897.51 428.5v54.5h2.98v-54.5zM900.49 466v17h2.98v-17zM903.47 476v7h2.98v-7zM915.38 474.5v6.6h2.98v-6.6z"/></g><path fill="#d4d4d4" d="M25.43 429.95v0.54h1.62v-0.54zM28.41 446v4.99h1.62v-4.99zM31.39 458.49v3.57h1.62v-3.57zM34.37 459.91v3.03h1.62v-3.03zM37.34 427.27v6.24h1.62v-6.24zM40.32 438.51v4.82h1.62v-4.82zM43.3 441.18v5.71h1.62v-5.71zM46.28 441.18v5.71h1.62v-5.71zM49.26 442.08v8.74h1.62v-8.74zM52.24 443.68v6.24h1.62v-6.24zM55.22 438.51v7.49h1.62v-7.49zM58.2 437.08v6.6h1.62v-6.6zM61.17 433.51v7.14h1.62v-7.14zM64.15 438.87v6.78h1.62v-6.78zM67.13 429.95v8.38h1.62v-8.38zM70.11 415.14v9.81h1.62v-9.81zM73.09 426.02v9.81h1.62v-9.81zM76.07 431.2v9.45h1.62v-9.45zM79.05 446v8.92h1.62v-8.92zM82.02 448.68v9.81h1.62v-9.81zM85 451v9.81h1.62v-9.81zM87.98 450.1v9.28h1.62v-9.28zM90.96 448.68v9.45h1.62v-9.45zM93.94 439.76v9.81h1.62v-9.81zM96.92 442.08v9.81h1.62v-9.81zM99.9 440.11v10.7h1.62v-10.7zM102.88 434.76v9.81h1.62v-9.81zM105.85 428.52v9.81h1.62v-9.81zM108.83 418.71v11.24h1.62v-11.24zM111.81 409.97v12.31h1.62v-12.31zM114.79 411.22v11.06h1.62v-11.06zM117.77 423.7v8.38h1.62v-8.38zM120.75 429.95v9.81h1.62v-9.81zM123.73 412.11v16.05h1.62v-16.05zM126.71 395.16v21.94h1.62v-21.94zM129.68 412.47v17.48h1.62v-17.48zM132.66 422.28v13.56h1.62v-13.56zM135.64 404.97v16.05h1.62v-16.05zM138.62 434.94v5.71h1.62v-5.71zM141.6 437.08v3.57h1.62v-3.57zM144.58 438.51v3.57h1.62v-3.57zM147.56 442.08v2.5h1.62v-2.5zM150.53 434.94v3.39h1.62v-3.39zM153.51 432.09v4.99h1.62v-4.99zM156.49 421.03v7.49h1.62v-7.49zM159.47 428.52v3.57h1.62v-3.57zM162.45 431.2v4.64h1.62v-4.64zM165.43 442.08v2.5h1.62v-2.5zM168.41 435.83v2.5h1.62v-2.5zM171.39 438.33v2.32h1.62v-2.32zM174.36 441.18v3.39h1.62v-3.39zM177.34 427.27v4.82h1.62v-4.82zM180.32 423.7v4.82h1.62v-4.82zM183.3 436.19v3.92h1.62v-3.92zM186.28 442.43v3.21h1.62v-3.21zM189.26 421.03v3.57h1.62v-3.57zM192.24 412.47v3.21h1.62v-3.21zM195.22 440.11v1.96h1.62v-1.96zM198.19 408.54v6.24h1.62v-6.24zM201.17 428.52v4.99h1.62v-4.99zM204.15 442.43v3.57h1.62v-3.57zM207.13 447.25v2.32h1.62v-2.32zM210.11 443.68v3.21h1.62v-3.21zM213.09 443.68v2.32h1.62v-2.32zM216.07 445.11v3.03h1.62v-3.03zM219.04 447.25v2.32h1.62v-2.32zM222.02 447.25v2.32h1.62v-2.32zM225 426.02v6.06h1.62v-6.06zM227.98 442.43v3.21h1.62v-3.21zM230.96 443.68v1.96h1.62v-1.96zM233.94 428.52v4.99h1.62v-4.99zM236.92 427.27v11.06h1.62v-11.06zM239.9 429.95v7.14h1.62v-7.14zM242.87 443.68v4.46h1.62v-4.46zM245.85 446v4.82h1.62v-4.82zM248.83 447.25v2.32h1.62v-2.32zM251.81 445.11v3.03h1.62v-3.03zM254.79 438.51v6.06h1.62v-6.06zM257.77 445.11v1.78h1.62v-1.78zM260.75 443.68v2.32h1.62v-2.32zM263.73 436.19v3.57h1.62v-3.57zM266.7 443.68v2.32h1.62v-2.32zM269.68 450.1v1.78h1.62v-1.78zM272.66 447.25v2.32h1.62v-2.32zM275.64 443.68v1.96h1.62v-1.96zM278.62 438.51v3.57h1.62v-3.57zM281.6 423.7v3.57h1.62v-3.57zM284.58 440.11v3.21h1.62v-3.21zM287.55 440.11v1.96h1.62v-1.96zM290.53 450.1v0.71h1.62v-0.71zM293.51 451v0.89h1.62v-0.89zM296.49 446v2.14h1.62v-2.14zM299.47 448.68v2.14h1.62v-2.14zM302.45 436.19v4.46h1.62v-4.46zM305.43 448.68v2.14h1.62v-2.14zM308.41 452.24v2.14h1.62v-2.14zM311.38 448.68v0.89h1.62v-0.89zM314.36 448.68v0.89h1.62v-0.89zM317.34 441.18v3.39h1.62v-3.39zM320.32 438.51v2.14h1.62v-2.14zM323.3 437.08v2.68h1.62v-2.68zM326.28 445.11v1.78h1.62v-1.78zM329.26 436.19v3.57h1.62v-3.57zM332.24 436.19v3.57h1.62v-3.57zM335.21 441.18v2.14h1.62v-2.14zM338.19 442.43v3.21h1.62v-3.21zM341.17 450.1v0.71h1.62v-0.71zM344.15 442.43v2.14h1.62v-2.14zM347.13 447.25v2.32h1.62v-2.32zM350.11 445.11v1.78h1.62v-1.78zM353.09 450.1v0.71h1.62v-0.71zM356.07 450.1v1.78h1.62v-1.78zM359.04 446v3.57h1.62v-3.57zM362.02 447.25v3.57h1.62v-3.57zM365 442.43v2.14h1.62v-2.14zM367.98 447.25v2.32h1.62v-2.32zM370.96 452.24v2.14h1.62v-2.14zM373.94 453.49v0.89h1.62v-0.89zM376.92 452.24v0.89h1.62v-0.89zM379.89 451v0.89h1.62v-0.89zM382.87 448.68v2.14h1.62v-2.14zM385.85 443.68v2.32h1.62v-2.32zM388.83 443.68v2.32h1.62v-2.32zM391.81 450.1v1.78h1.62v-1.78zM394.79 454.92v2.14h1.62v-2.14zM397.77 443.68v0.89h1.62v-0.89zM400.75 452.24v0.89h1.62v-0.89zM403.72 443.68v0.89h1.62v-0.89zM406.7 437.08v2.68h1.62v-2.68zM409.68 453.49v2.32h1.62v-2.32zM412.66 454.92v2.14h1.62v-2.14zM415.64 459.91v0.89h1.62v-0.89zM418.62 438.51v2.14h1.62v-2.14zM421.6 371.97v2.14h1.62v-2.14zM424.58 400.16v2.14h1.62v-2.14zM427.55 400.16v2.14h1.62v-2.14zM430.53 409.97v2.14h1.62v-2.14zM433.51 436.19v2.14h1.62v-2.14zM436.49 441.18v1.25h1.62v-1.25zM439.47 442.43v2.14h1.62v-2.14zM442.45 437.08v2.68h1.62v-2.68zM445.43 433.51v2.32h1.62v-2.32zM448.4 440.11v1.96h1.62v-1.96zM451.38 446v2.14h1.62v-2.14zM454.36 451v2.14h1.62v-2.14zM457.34 450.1v1.78h1.62v-1.78zM460.32 453.49v2.32h1.62v-2.32zM463.3 451v2.14h1.62v-2.14zM466.28 452.24v0.89h1.62v-0.89zM469.26 451v2.14h1.62v-2.14zM472.23 452.24v0.89h1.62v-0.89zM475.21 457.06v1.43h1.62v-1.43zM478.19 458.49v2.32h1.62v-2.32zM481.17 458.49v0.89h1.62v-0.89zM484.15 454.92v2.14h1.62v-2.14zM487.13 458.49v0.89h1.62v-0.89zM490.11 452.24v2.14h1.62v-2.14zM493.09 455.81v2.32h1.62v-2.32zM496.06 455.81v3.57h1.62v-3.57zM499.04 459.91v1.78h1.62v-1.78zM502.02 461.16v2.14h1.62v-2.14zM505 457.06v2.32h1.62v-2.32zM507.98 457.06v3.21h1.62v-3.21zM510.96 454.92v2.14h1.62v-2.14zM513.94 455.81v2.32h1.62v-2.32zM516.91 454.92v2.14h1.62v-2.14zM519.89 458.49v2.32h1.62v-2.32zM522.87 461.16v2.14h1.62v-2.14zM525.85 454.92v2.14h1.62v-2.14zM528.83 448.68v3.21h1.62v-3.21zM531.81 458.49v0.89h1.62v-0.89zM534.79 459.91v1.78h1.62v-1.78zM537.77 462.05v2.14h1.62v-2.14zM540.74 464.73v2.14h1.62v-2.14zM543.72 457.06v2.32h1.62v-2.32zM546.7 453.49v2.32h1.62v-2.32zM549.68 463.3v0.89h1.62v-0.89zM552.66 461.16v1.78h1.62v-1.78zM555.64 462.05v1.25h1.62v-1.25zM558.62 463.3v2.32h1.62v-2.32zM561.6 463.3v0.89h1.62v-0.89zM564.57 463.3v0.89h1.62v-0.89zM567.55 461.16v0.89h1.62v-0.89zM570.53 464.73v2.14h1.62v-2.14zM573.51 459.91v1.78h1.62v-1.78zM576.49 458.49v3.21h1.62v-3.21zM579.47 459.91v3.03h1.62v-3.03zM582.45 468.3v0.89h1.62v-0.89zM585.42 469.73v0.89h1.62v-0.89zM588.4 467.41v1.78h1.62v-1.78zM591.38 465.98v1.96h1.62v-1.96zM594.36 462.05v1.78h1.62v-1.78zM597.34 464.73v1.78h1.62v-1.78zM600.32 470.97v0.89h1.62v-0.89zM603.3 470.97v0.89h1.62v-0.89zM606.28 470.97v0.89h1.62v-0.89zM609.25 468.3v1.78h1.62v-1.78zM612.23 467.41v1.78h1.62v-1.78zM615.21 463.3v2.32h1.62v-2.32zM618.19 467.41v0.54h1.62v-0.54zM621.17 465.98v1.43h1.62v-1.43zM624.15 459.91v1.78h1.62v-1.78zM627.13 464.73v1.78h1.62v-1.78zM630.11 465.98v1.96h1.62v-1.96zM633.08 468.3v0.89h1.62v-0.89zM636.06 465.98v1.43h1.62v-1.43zM639.04 467.41v1.78h1.62v-1.78zM642.02 457.06v2.32h1.62v-2.32zM645 464.73v1.78h1.62v-1.78zM647.98 467.41v0.89h1.62v-0.89zM650.96 463.3v1.43h1.62v-1.43zM653.94 465.98v0.89h1.62v-0.89zM656.91 463.3v2.32h1.62v-2.32zM659.89 463.3v1.43h1.62v-1.43zM662.87 462.05v1.25h1.62v-1.25zM665.85 463.3v2.32h1.62v-2.32zM668.83 454.92v2.14h1.62v-2.14zM671.81 442.08v4.82h1.62v-4.82zM674.79 459.91v1.78h1.62v-1.78zM677.76 461.16v2.68h1.62v-2.68zM680.74 458.49v3.21h1.62v-3.21zM683.72 457.06v4.64h1.62v-4.64zM686.7 459.91v1.78h1.62v-1.78zM689.68 457.06v2.32h1.62v-2.32zM692.66 448.68v4.46h1.62v-4.46zM695.64 458.49v3.21h1.62v-3.21zM698.62 458.49v3.21h1.62v-3.21zM701.59 462.05v3.57h1.62v-3.57zM704.57 464.73v2.14h1.62v-2.14zM707.55 467.41v1.78h1.62v-1.78zM710.53 468.3v0.89h1.62v-0.89zM713.51 463.3v2.32h1.62v-2.32zM716.49 463.3v2.32h1.62v-2.32zM719.47 463.3v2.32h1.62v-2.32zM722.45 468.3v0.89h1.62v-0.89zM725.42 462.05v3.57h1.62v-3.57zM728.4 464.73v2.14h1.62v-2.14zM731.38 468.3v0.89h1.62v-0.89zM734.36 465.98v1.96h1.62v-1.96zM737.34 464.73v2.14h1.62v-2.14zM740.32 464.73v2.14h1.62v-2.14zM743.3 469.73v0.89h1.62v-0.89zM746.27 468.3v1.78h1.62v-1.78zM749.25 469.73v1.78h1.62v-1.78zM752.23 470.97v0.89h1.62v-0.89zM755.21 470.97v0.89h1.62v-0.89zM758.19 469.73v0.89h1.62v-0.89zM761.17 468.3v1.78h1.62v-1.78zM764.15 468.3v1.78h1.62v-1.78zM767.13 467.41v0.54h1.62v-0.54zM770.1 469.73v0.89h1.62v-0.89zM773.08 465.98v1.96h1.62v-1.96zM776.06 468.3v1.78h1.62v-1.78zM779.04 468.3v1.78h1.62v-1.78zM782.02 468.3v1.78h1.62v-1.78zM785 457.06v3.75h1.62v-3.75zM787.98 463.3v2.32h1.62v-2.32zM790.96 464.73v2.14h1.62v-2.14zM793.93 461.16v1.78h1.62v-1.78zM796.91 461.16v1.78h1.62v-1.78zM799.89 458.49v1.78h1.62v-1.78zM802.87 457.06v2.32h1.62v-2.32zM805.85 449.57v4.82h1.62v-4.82zM808.83 448.68v3.21h1.62v-3.21zM811.81 459.91v2.14h1.62v-2.14zM814.78 455.81v3.57h1.62v-3.57zM817.76 453.49v2.32h1.62v-2.32zM820.74 451v4.82h1.62v-4.82zM823.72 446v3.57h1.62v-3.57zM826.7 454.92v3.21h1.62v-3.21zM829.68 453.49v3.57h1.62v-3.57zM832.66 458.49v3.21h1.62v-3.21zM835.64 449.57v4.82h1.62v-4.82zM838.61 453.49v2.32h1.62v-2.32zM841.59 447.25v4.64h1.62v-4.64zM844.57 446v5.89h1.62v-5.89zM847.55 401v7.5h1.62v-7.5zM850.53 210.1v4.5h1.62v-4.5zM853.51 177.3v2.5h1.62v-2.5zM856.49 215.1v3h1.62v-3zM859.47 226.2v6.7h1.62v-6.7zM862.44 304.2v8.1h1.62v-8.1zM865.42 361.3v9.8h1.62v-9.8zM868.4 384.5v8.9h1.62v-8.9zM871.38 367.6v6.2h1.62v-6.2zM874.36 392.5v7.1h1.62v-7.1zM877.34 401v5.8h1.62v-5.8zM880.32 188.4v8.9h1.62v-8.9zM883.29 345.3v8.4h1.62v-8.4zM886.27 350.3v8.3h1.62v-8.3zM889.25 334.2v8.4h1.62v-8.4zM892.23 311.7v17.2h1.62v-17.2zM895.21 341.7v8h1.62v-8zM898.19 377.7v11.2h1.62v-11.2zM901.17 411.2v13.4h1.62v-13.4zM904.15 421v17.9h1.62v-17.9zM907.12 440.11v10.88h1.62v-10.88zM910.1 437.08v9.81h1.62v-9.81zM913.08 441.18v9.81h1.62v-9.81zM916.06 442.4v8.6h1.62v-8.6zM919.04 450.1v6.96h1.62v-6.96zM922.02 438.33v12.67h1.62v-12.67zM925 441.18v9.81h1.62v-9.81zM927.98 448.68v8.38h1.62v-8.38zM930.95 446v9.81h1.62v-9.81zM933.93 446v11.06h1.62v-11.06zM936.91 455.81v8.92h1.62v-8.92zM939.89 457.06v8.92h1.62v-8.92zM942.87 453.14v3.92h1.62v-3.92zM945.85 445.11v8.03h1.62v-8.03zM948.83 434.76v14.81h1.62v-14.81zM951.81 441.18v13.2h1.62v-13.2z"/><path fill="#8bcfc7" d="M25.43 430.48v14.63h1.62v-14.63zM28.41 451v18.73h1.62v-18.73zM31.39 462.05v19.09h1.62v-19.09zM34.37 462.95v15.16h1.62v-15.16zM37.34 433.51v17.48h1.62v-17.48zM40.32 443.33v13.91h1.62v-13.91zM43.3 446.89v14.27h1.62v-14.27zM46.28 446.89v19.09h1.62v-19.09zM49.26 450.82v16.59h1.62v-16.59zM52.24 449.93v18.73h1.62v-18.73zM55.22 446v21.41h1.62v-21.41zM58.2 443.68v23.72h1.62v-23.72zM61.17 440.65v26.76h1.62v-26.76zM64.15 445.64v24.08h1.62v-24.08zM67.13 438.33v31.39h1.62v-31.39zM70.11 424.95v43.35h1.62v-43.35zM73.09 435.83v35.14h1.62v-35.14zM76.07 440.65v31.75h1.62v-31.75zM79.05 454.92v23.19h1.62v-23.19zM82.02 458.49v23.55h1.62v-23.55zM85 460.81v22.3h1.62v-22.3zM87.98 459.38v27.65h1.62v-27.65zM90.96 458.13v28.9h1.62v-28.9zM93.94 449.57v37.46h1.62v-37.46zM96.92 451.89v31.22h1.62v-31.22zM99.9 450.82v36.21h1.62v-36.21zM102.88 444.57v37.46h1.62v-37.46zM105.85 438.33v33.89h1.62v-33.89zM108.83 429.95v44.6h1.62v-44.6zM111.81 422.28v52.27h1.62v-52.27zM114.79 422.28v53.51h1.62v-53.51zM117.77 432.09v45.13h1.62v-45.13zM120.75 439.76v41.38h1.62v-41.38zM123.73 428.16v47.81h1.62v-47.81zM126.71 417.1v58.87h1.62v-58.87zM129.68 429.95v48.52h1.62v-48.52zM132.66 435.83v41.38h1.62v-41.38zM135.64 421.03v56.19h1.62v-56.19zM138.62 440.65v36.57h1.62v-36.57zM141.6 440.65v36.57h1.62v-36.57zM144.58 442.08v35.14h1.62v-35.14zM147.56 444.57v32.64h1.62v-32.64zM150.53 438.33v40.14h1.62v-40.14zM153.51 437.08v41.38h1.62v-41.38zM156.49 428.52v48.7h1.62v-48.7zM159.47 432.09v42.45h1.62v-42.45zM162.45 435.83v40.14h1.62v-40.14zM165.43 444.57v33.89h1.62v-33.89zM168.41 438.33v41.21h1.62v-41.21zM171.39 440.65v38.89h1.62v-38.89zM174.36 444.57v34.96h1.62v-34.96zM177.34 432.09v47.45h1.62v-47.45zM180.32 428.52v51.02h1.62v-51.02zM183.3 440.11v39.42h1.62v-39.42zM186.28 445.64v35.14h1.62v-35.14zM189.26 424.6v56.19h1.62v-56.19zM192.24 415.68v65.11h1.62v-65.11zM195.22 442.08v37.46h1.62v-37.46zM198.19 414.78v66h1.62v-66zM201.17 433.51v47.27h1.62v-47.27zM204.15 446v33.54h1.62v-33.54zM207.13 449.57v31.22h1.62v-31.22zM210.11 446.89v40.14h1.62v-40.14zM213.09 446v37.1h1.62v-37.1zM216.07 448.14v31.75h1.62v-31.75zM219.04 449.57v31.57h1.62v-31.57zM222.02 449.57v31.57h1.62v-31.57zM225 432.09v49.05h1.62v-49.05zM227.98 445.64v33.89h1.62v-33.89zM230.96 445.64v35.5h1.62v-35.5zM233.94 433.51v47.63h1.62v-47.63zM236.92 438.33v41.21h1.62v-41.21zM239.9 437.08v42.45h1.62v-42.45zM242.87 448.14v38.89h1.62v-38.89zM245.85 450.82v36.21h1.62v-36.21zM248.83 449.57v37.46h1.62v-37.46zM251.81 448.14v33.89h1.62v-33.89zM254.79 444.57v38.53h1.62v-38.53zM257.77 446.89v40.14h1.62v-40.14zM260.75 446v41.03h1.62v-41.03zM263.73 439.76v41.38h1.62v-41.38zM266.7 446v33.89h1.62v-33.89zM269.68 451.89v28.01h1.62v-28.01zM272.66 449.57v30.32h1.62v-30.32zM275.64 445.64v34.25h1.62v-34.25zM278.62 442.08v39.07h1.62v-39.07zM281.6 427.27v53.87h1.62v-53.87zM284.58 443.33v37.82h1.62v-37.82zM287.55 442.08v37.46h1.62v-37.46zM290.53 450.82v31.22h1.62v-31.22zM293.51 451.89v30.15h1.62v-30.15zM296.49 448.14v33.89h1.62v-33.89zM299.47 450.82v31.22h1.62v-31.22zM302.45 440.65v41.38h1.62v-41.38zM305.43 450.82v36.21h1.62v-36.21zM308.41 454.38v32.64h1.62v-32.64zM311.38 449.57v33.89h1.62v-33.89zM314.36 449.57v33.89h1.62v-33.89zM317.34 444.57v38.89h1.62v-38.89zM320.32 440.65v39.24h1.62v-39.24zM323.3 439.76v38.71h1.62v-38.71zM326.28 446.89v33h1.62v-33zM329.26 439.76v38.71h1.62v-38.71zM332.24 439.76v38.71h1.62v-38.71zM335.21 443.33v35.14h1.62v-35.14zM338.19 445.64v34.25h1.62v-34.25zM341.17 450.82v29.08h1.62v-29.08zM344.15 444.57v35.32h1.62v-35.32zM347.13 449.57v30.32h1.62v-30.32zM350.11 446.89v33h1.62v-33zM353.09 450.82v29.08h1.62v-29.08zM356.07 451.89v31.22h1.62v-31.22zM359.04 449.57v31.57h1.62v-31.57zM362.02 450.82v29.08h1.62v-29.08zM365 444.57v35.32h1.62v-35.32zM367.98 449.57v30.32h1.62v-30.32zM370.96 454.38v27.65h1.62v-27.65zM373.94 454.38v27.65h1.62v-27.65zM376.92 453.14v28.9h1.62v-28.9zM379.89 451.89v29.25h1.62v-29.25zM382.87 450.82v30.32h1.62v-30.32zM385.85 446v35.14h1.62v-35.14zM388.83 446v37.1h1.62v-37.1zM391.81 451.89v35.14h1.62v-35.14zM394.79 457.06v29.97h1.62v-29.97zM397.77 444.57v42.45h1.62v-42.45zM400.75 453.14v33.89h1.62v-33.89zM403.72 444.57v42.45h1.62v-42.45zM406.7 439.76v47.27h1.62v-47.27zM409.68 455.81v31.22h1.62v-31.22zM412.66 457.06v29.97h1.62v-29.97zM415.64 460.81v26.22h1.62v-26.22zM418.62 440.65v24.08h1.62v-24.08zM421.6 374.11v29.61h1.62v-29.61zM424.58 402.3v29.97h1.62v-29.97zM427.55 402.3v32.47h1.62v-32.47zM430.53 412.11v29.97h1.62v-29.97zM433.51 438.33v26.4h1.62v-26.4zM436.49 442.43v29.79h1.62v-29.79zM439.47 444.57v30.32h1.62v-30.32zM442.45 439.76v37.46h1.62v-37.46zM445.43 435.83v42.28h1.62v-42.28zM448.4 442.08v36.03h1.62v-36.03zM451.38 448.14v30.32h1.62v-30.32zM454.36 453.14v26.76h1.62v-26.76zM457.34 451.89v29.25h1.62v-29.25zM460.32 455.81v26.22h1.62v-26.22zM463.3 453.14v28.9h1.62v-28.9zM466.28 453.14v29.61h1.62v-29.61zM469.26 453.14v31.39h1.62v-31.39zM472.23 453.14v31.75h1.62v-31.75zM475.21 458.49v26.76h1.62v-26.76zM478.19 460.81v24.79h1.62v-24.79zM481.17 459.38v26.22h1.62v-26.22zM484.15 457.06v28.54h1.62v-28.54zM487.13 459.38v26.58h1.62v-26.58zM490.11 454.38v31.57h1.62v-31.57zM493.09 458.13v28.9h1.62v-28.9zM496.06 459.38v27.65h1.62v-27.65zM499.04 461.7v25.33h1.62v-25.33zM502.02 463.3v23.72h1.62v-23.72zM505 459.38v27.65h1.62v-27.65zM507.98 460.27v26.76h1.62v-26.76zM510.96 457.06v29.97h1.62v-29.97zM513.94 458.13v28.9h1.62v-28.9zM516.91 457.06v29.97h1.62v-29.97zM519.89 460.81v26.22h1.62v-26.22zM522.87 463.3v23.72h1.62v-23.72zM525.85 457.06v29.97h1.62v-29.97zM528.83 451.89v35.14h1.62v-35.14zM531.81 459.38v27.65h1.62v-27.65zM534.79 461.7v21.41h1.62v-21.41zM537.77 464.2v22.83h1.62v-22.83zM540.74 466.87v20.16h1.62v-20.16zM543.72 459.38v23.72h1.62v-23.72zM546.7 455.81v31.22h1.62v-31.22zM549.68 464.2v22.83h1.62v-22.83zM552.66 462.95v24.08h1.62v-24.08zM555.64 463.3v23.72h1.62v-23.72zM558.62 465.62v21.41h1.62v-21.41zM561.6 464.2v22.83h1.62v-22.83zM564.57 464.2v22.83h1.62v-22.83zM567.55 462.05v24.97h1.62v-24.97zM570.53 466.87v20.16h1.62v-20.16zM573.51 461.7v25.33h1.62v-25.33zM576.49 461.7v25.33h1.62v-25.33zM579.47 462.95v24.08h1.62v-24.08zM582.45 469.19v17.84h1.62v-17.84zM585.42 470.62v16.41h1.62v-16.41zM588.4 469.19v17.84h1.62v-17.84zM591.38 467.94v19.09h1.62v-19.09zM594.36 463.84v23.19h1.62v-23.19zM597.34 466.51v16.59h1.62v-16.59zM600.32 471.87v15.16h1.62v-15.16zM603.3 471.87v15.16h1.62v-15.16zM606.28 471.87v15.16h1.62v-15.16zM609.25 470.08v16.95h1.62v-16.95zM612.23 469.19v17.84h1.62v-17.84zM615.21 465.62v21.41h1.62v-21.41zM618.19 467.94v19.09h1.62v-19.09zM621.17 467.41v14.63h1.62v-14.63zM624.15 461.7v15.52h1.62v-15.52zM627.13 466.51v14.63h1.62v-14.63zM630.11 467.94v19.09h1.62v-19.09zM633.08 469.19v13.91h1.62v-13.91zM636.06 467.41v19.62h1.62v-19.62zM639.04 469.19v17.84h1.62v-17.84zM642.02 459.38v23.72h1.62v-23.72zM645 466.51v16.59h1.62v-16.59zM647.98 468.3v18.73h1.62v-18.73zM650.96 464.73v22.3h1.62v-22.3zM653.94 466.87v20.16h1.62v-20.16zM656.91 465.62v21.41h1.62v-21.41zM659.89 464.73v22.3h1.62v-22.3zM662.87 463.3v23.72h1.62v-23.72zM665.85 465.62v21.41h1.62v-21.41zM668.83 457.06v17.48h1.62v-17.48zM671.81 446.89v24.08h1.62v-24.08zM674.79 461.7v20.34h1.62v-20.34zM677.76 463.84v23.19h1.62v-23.19zM680.74 461.7v21.41h1.62v-21.41zM683.72 461.7v25.33h1.62v-25.33zM686.7 461.7v21.41h1.62v-21.41zM689.68 459.38v18.73h1.62v-18.73zM692.66 453.14v29.97h1.62v-29.97zM695.64 461.7v21.76h1.62v-21.76zM698.62 461.7v25.33h1.62v-25.33zM701.59 465.62v21.41h1.62v-21.41zM704.57 466.87v20.16h1.62v-20.16zM707.55 469.19v17.84h1.62v-17.84zM710.53 469.19v17.84h1.62v-17.84zM713.51 465.62v21.41h1.62v-21.41zM716.49 465.62v21.41h1.62v-21.41zM719.47 465.62v17.48h1.62v-17.48zM722.45 469.19v17.84h1.62v-17.84zM725.42 465.62v21.41h1.62v-21.41zM728.4 466.87v20.16h1.62v-20.16zM731.38 469.19v17.84h1.62v-17.84zM734.36 467.94v19.09h1.62v-19.09zM737.34 466.87v20.16h1.62v-20.16zM740.32 466.87v20.16h1.62v-20.16zM743.3 470.62v16.41h1.62v-16.41zM746.27 470.08v16.95h1.62v-16.95zM749.25 471.51v15.52h1.62v-15.52zM752.23 471.87v15.16h1.62v-15.16zM755.21 471.87v15.16h1.62v-15.16zM758.19 470.62v16.41h1.62v-16.41zM761.17 470.08v16.95h1.62v-16.95zM764.15 470.08v13.02h1.62v-13.02zM767.13 467.94v19.09h1.62v-19.09zM770.1 470.62v16.41h1.62v-16.41zM773.08 467.94v19.09h1.62v-19.09zM776.06 470.08v16.95h1.62v-16.95zM779.04 470.08v16.95h1.62v-16.95zM782.02 470.08v16.95h1.62v-16.95zM785 460.81v20.34h1.62v-20.34zM787.98 465.62v15.52h1.62v-15.52zM790.96 466.87v14.27h1.62v-14.27zM793.93 462.95v18.19h1.62v-18.19zM796.91 462.95v18.19h1.62v-18.19zM799.89 460.27v20.87h1.62v-20.87zM802.87 459.38v21.76h1.62v-21.76zM805.85 454.38v25.51h1.62v-25.51zM808.83 451.89v28.01h1.62v-28.01zM811.81 462.05v19.98h1.62v-19.98zM814.78 459.38v21.76h1.62v-21.76zM817.76 455.81v25.33h1.62v-25.33zM820.74 455.81v25.33h1.62v-25.33zM823.72 449.57v30.32h1.62v-30.32zM826.7 458.13v23.01h1.62v-23.01zM829.68 457.06v24.08h1.62v-24.08zM832.66 461.7v20.34h1.62v-20.34zM835.64 454.38v27.65h1.62v-27.65zM838.61 455.81v26.22h1.62v-26.22zM841.59 451.89v30.15h1.62v-30.15zM844.57 451.89v29.25h1.62v-29.25zM847.55 408.5v31.6h1.62v-31.6zM850.53 214.6v29.9h1.62v-29.9zM853.51 179.8v26.4h1.62v-26.4zM856.49 218.1v35h1.62v-35zM859.47 232.9v42.8h1.62v-42.8zM862.44 312.3v51.7h1.62v-51.7zM865.42 371.1v37.4h1.62v-37.4zM868.4 393.4v33h1.62v-33zM871.38 373.8v33h1.62v-33zM874.36 399.6v37.5h1.62v-37.5zM877.34 406.8v34.4h1.62v-34.4zM880.32 197.3v243.3h1.62v-243.3zM883.29 353.7v92.8h1.62v-92.8zM886.27 358.6v46.9h1.62v-46.9zM889.25 342.6v36.4h1.62v-36.4zM892.23 328.9v55.3h1.62v-55.3zM895.21 349.7v37.1h1.62v-37.1zM898.19 388.9v39.3h1.62v-39.3zM901.17 424.6v41.2h1.62v-41.2zM904.15 438.9v36.9h1.62v-36.9zM907.12 451v28.54h1.62v-28.54zM910.1 446.89v27.65h1.62v-27.65zM913.08 451v23.55h1.62v-23.55zM916.06 451v22.3h1.62v-22.3zM919.04 457.06v22.83h1.62v-22.83zM922.02 451v28.9h1.62v-28.9zM925 451v29.79h1.62v-29.79zM927.98 457.06v24.97h1.62v-24.97zM930.95 455.81v24.08h1.62v-24.08zM933.93 457.06v22.83h1.62v-22.83zM936.91 464.73v16.41h1.62v-16.41zM939.89 465.98v16.05h1.62v-16.05zM942.87 457.06v24.97h1.62v-24.97zM945.85 453.14v28.9h1.62v-28.9zM948.83 449.57v32.47h1.62v-32.47zM951.81 454.38v26.76h1.62v-26.76z"/><path fill="#e9b460" d="M25.43 445.11v41.89h1.62v-41.89zM28.41 469.73v17.27h1.62v-17.27zM31.39 481.14v5.86h1.62v-5.86zM34.37 478.11v8.89h1.62v-8.89zM37.34 451v36h1.62v-36zM40.32 457.24v29.76h1.62v-29.76zM43.3 461.16v25.84h1.62v-25.84zM46.28 465.98v21.02h1.62v-21.02zM49.26 467.41v19.59h1.62v-19.59zM52.24 468.66v18.34h1.62v-18.34zM55.22 467.41v19.59h1.62v-19.59zM58.2 467.41v19.59h1.62v-19.59zM61.17 467.41v19.59h1.62v-19.59zM64.15 469.73v17.27h1.62v-17.27zM67.13 469.73v17.27h1.62v-17.27zM70.11 468.3v18.7h1.62v-18.7zM73.09 470.97v16.03h1.62v-16.03zM76.07 472.4v14.6h1.62v-14.6zM79.05 478.11v8.89h1.62v-8.89zM82.02 482.03v4.97h1.62v-4.97zM85 483.1v3.9h1.62v-3.9zM96.92 483.1v3.9h1.62v-3.9zM102.88 482.03v4.97h1.62v-4.97zM105.85 472.22v14.78h1.62v-14.78zM108.83 474.54v12.46h1.62v-12.46zM111.81 474.54v12.46h1.62v-12.46zM114.79 475.79v11.21h1.62v-11.21zM117.77 477.22v9.78h1.62v-9.78zM120.75 481.14v5.86h1.62v-5.86zM123.73 475.97v11.03h1.62v-11.03zM126.71 475.97v11.03h1.62v-11.03zM129.68 478.47v8.53h1.62v-8.53zM132.66 477.22v9.78h1.62v-9.78zM135.64 477.22v9.78h1.62v-9.78zM138.62 477.22v9.78h1.62v-9.78zM141.6 477.22v9.78h1.62v-9.78zM144.58 477.22v9.78h1.62v-9.78zM147.56 477.22v9.78h1.62v-9.78zM150.53 478.47v8.53h1.62v-8.53zM153.51 478.47v8.53h1.62v-8.53zM156.49 477.22v9.78h1.62v-9.78zM159.47 474.54v12.46h1.62v-12.46zM162.45 475.97v11.03h1.62v-11.03zM165.43 478.47v8.53h1.62v-8.53zM168.41 479.54v7.46h1.62v-7.46zM171.39 479.54v7.46h1.62v-7.46zM174.36 479.54v7.46h1.62v-7.46zM177.34 479.54v7.46h1.62v-7.46zM180.32 479.54v7.46h1.62v-7.46zM183.3 479.54v7.46h1.62v-7.46zM186.28 480.78v6.22h1.62v-6.22zM189.26 480.78v6.22h1.62v-6.22zM192.24 480.78v6.22h1.62v-6.22zM195.22 479.54v7.46h1.62v-7.46zM198.19 480.78v6.22h1.62v-6.22zM201.17 480.78v6.22h1.62v-6.22zM204.15 479.54v7.46h1.62v-7.46zM207.13 480.78v6.22h1.62v-6.22zM213.09 483.1v3.9h1.62v-3.9zM216.07 479.89v7.11h1.62v-7.11zM219.04 481.14v5.86h1.62v-5.86zM222.02 481.14v5.86h1.62v-5.86zM225 481.14v5.86h1.62v-5.86zM227.98 479.54v7.46h1.62v-7.46zM230.96 481.14v5.86h1.62v-5.86zM233.94 481.14v5.86h1.62v-5.86zM236.92 479.54v7.46h1.62v-7.46zM239.9 479.54v7.46h1.62v-7.46zM251.81 482.03v4.97h1.62v-4.97zM254.79 483.1v3.9h1.62v-3.9zM263.73 481.14v5.86h1.62v-5.86zM266.7 479.89v7.11h1.62v-7.11zM269.68 479.89v7.11h1.62v-7.11zM272.66 479.89v7.11h1.62v-7.11zM275.64 479.89v7.11h1.62v-7.11zM278.62 481.14v5.86h1.62v-5.86zM281.6 481.14v5.86h1.62v-5.86zM284.58 481.14v5.86h1.62v-5.86zM287.55 479.54v7.46h1.62v-7.46zM290.53 482.03v4.97h1.62v-4.97zM293.51 482.03v4.97h1.62v-4.97zM296.49 482.03v4.97h1.62v-4.97zM299.47 482.03v4.97h1.62v-4.97zM302.45 482.03v4.97h1.62v-4.97zM311.38 483.46v3.54h1.62v-3.54zM314.36 483.46v3.54h1.62v-3.54zM317.34 483.46v3.54h1.62v-3.54zM320.32 479.89v7.11h1.62v-7.11zM323.3 478.47v8.53h1.62v-8.53zM326.28 479.89v7.11h1.62v-7.11zM329.26 478.47v8.53h1.62v-8.53zM332.24 478.47v8.53h1.62v-8.53zM335.21 478.47v8.53h1.62v-8.53zM338.19 479.89v7.11h1.62v-7.11zM341.17 479.89v7.11h1.62v-7.11zM344.15 479.89v7.11h1.62v-7.11zM347.13 479.89v7.11h1.62v-7.11zM350.11 479.89v7.11h1.62v-7.11zM353.09 479.89v7.11h1.62v-7.11zM356.07 483.1v3.9h1.62v-3.9zM359.04 481.14v5.86h1.62v-5.86zM362.02 479.89v7.11h1.62v-7.11zM365 479.89v7.11h1.62v-7.11zM367.98 479.89v7.11h1.62v-7.11zM370.96 482.03v4.97h1.62v-4.97zM373.94 482.03v4.97h1.62v-4.97zM376.92 482.03v4.97h1.62v-4.97zM379.89 481.14v5.86h1.62v-5.86zM382.87 481.14v5.86h1.62v-5.86zM385.85 481.14v5.86h1.62v-5.86zM388.83 483.1v3.9h1.62v-3.9zM418.62 464.73v1.25h1.62v-1.25zM421.6 403.72v2.5h1.62v-2.5zM424.58 432.27v1.25h1.62v-1.25zM427.55 434.76v1.43h1.62v-1.43zM430.53 442.08v3.92h1.62v-3.92zM433.51 464.73v2.68h1.62v-2.68zM436.49 472.22v2.32h1.62v-2.32zM439.47 474.9v2.32h1.62v-2.32zM442.45 477.22v1.25h1.62v-1.25zM445.43 478.11v1.43h1.62v-1.43zM448.4 478.11v1.78h1.62v-1.78zM451.38 478.47v2.32h1.62v-2.32zM454.36 479.89v1.78h1.62v-1.78zM457.34 481.14v0.89h1.62v-0.89zM460.32 482.03v0.71h1.62v-0.71zM463.3 482.03v0.71h1.62v-0.71zM466.28 482.75v0.71h1.62v-0.71zM469.26 484.53v2.47h1.62v-2.47zM472.23 484.89v2.11h1.62v-2.11zM475.21 485.24v1.76h1.62v-1.76zM478.19 485.6v1.4h1.62v-1.4zM481.17 485.6v1.4h1.62v-1.4zM484.15 485.6v1.4h1.62v-1.4zM487.13 485.96v1.04h1.62v-1.04zM490.11 485.96v1.04h1.62v-1.04zM534.79 483.1v3.9h1.62v-3.9zM543.72 483.1v3.9h1.62v-3.9zM597.34 483.1v3.9h1.62v-3.9zM621.17 482.03v4.97h1.62v-4.97zM624.15 477.22v9.78h1.62v-9.78zM627.13 481.14v5.86h1.62v-5.86zM633.08 483.1v3.9h1.62v-3.9zM642.02 483.1v3.9h1.62v-3.9zM645 483.1v3.9h1.62v-3.9zM668.83 474.54v12.46h1.62v-12.46zM671.81 470.97v16.03h1.62v-16.03zM674.79 482.03v4.97h1.62v-4.97zM680.74 483.1v3.9h1.62v-3.9zM686.7 483.1v3.9h1.62v-3.9zM689.68 478.11v8.89h1.62v-8.89zM692.66 483.1v3.9h1.62v-3.9zM695.64 483.46v3.54h1.62v-3.54zM719.47 483.1v3.9h1.62v-3.9zM764.15 483.1v3.9h1.62v-3.9zM785 481.14v5.86h1.62v-5.86zM787.98 481.14v5.86h1.62v-5.86zM790.96 481.14v5.86h1.62v-5.86zM793.93 481.14v5.86h1.62v-5.86zM796.91 481.14v5.86h1.62v-5.86zM799.89 481.14v5.86h1.62v-5.86zM802.87 481.14v5.86h1.62v-5.86zM805.85 479.89v7.11h1.62v-7.11zM808.83 479.89v7.11h1.62v-7.11zM811.81 482.03v4.97h1.62v-4.97zM814.78 481.14v5.86h1.62v-5.86zM817.76 481.14v5.86h1.62v-5.86zM820.74 481.14v5.86h1.62v-5.86zM823.72 479.89v7.11h1.62v-7.11zM826.7 481.14v5.86h1.62v-5.86zM829.68 481.14v5.86h1.62v-5.86zM832.66 482.03v4.97h1.62v-4.97zM835.64 482.03v4.97h1.62v-4.97zM838.61 482.03v4.97h1.62v-4.97zM841.59 482.03v4.97h1.62v-4.97zM844.57 481.14v5.86h1.62v-5.86zM847.55 440.1v1.1h1.62v-1.1zM847.55 482v5h1.62v-5zM850.53 244.5v1.3h1.62v-1.3zM850.53 482.5v4.5h1.62v-4.5zM853.51 206.2v1.2h1.62v-1.2zM853.51 483v4h1.62v-4zM856.49 253.1v1.3h1.62v-1.3zM856.49 483v4h1.62v-4zM859.47 275.7v1.3h1.62v-1.3zM859.47 483v4h1.62v-4zM862.44 364v1.3h1.62v-1.3zM862.44 483v4h1.62v-4zM865.42 408.5v1.3h1.62v-1.3zM865.42 483v4h1.62v-4zM868.4 426.4v0.9h1.62v-0.9zM868.4 483v4h1.62v-4zM871.38 406.8v1.7h1.62v-1.7zM871.38 483v4h1.62v-4zM874.36 437.1v1.2h1.62v-1.2zM874.36 482.5v4.5h1.62v-4.5zM877.34 441.2v0.9h1.62v-0.9zM877.34 482v5h1.62v-5zM880.32 440.6v0.6h1.62v-0.6zM880.32 480.5v6.5h1.62v-6.5zM883.29 446.5v0.4h1.62v-0.4zM883.29 481.5v5.5h1.62v-5.5zM886.27 405.5v0.4h1.62v-0.4zM886.27 482.5v4.5h1.62v-4.5zM889.25 379v0.2h1.62v-0.2zM889.25 483v4h1.62v-4zM892.23 384.2v0.3h1.62v-0.3zM892.23 483v4h1.62v-4zM895.21 386.8v0.3h1.62v-0.3zM895.21 483v4h1.62v-4zM898.19 428.2v0.3h1.62v-0.3zM898.19 483v4h1.62v-4zM901.17 465.8v0.2h1.62v-0.2zM901.17 483v4h1.62v-4zM904.15 475.8v0.2h1.62v-0.2zM904.15 483v4h1.62v-4zM907.12 479.54v7.46h1.62v-7.46zM910.1 474.54v12.46h1.62v-12.46zM913.08 474.54v12.46h1.62v-12.46zM916.06 473.3v1.2h1.62v-1.2zM916.06 481.1v5.9h1.62v-5.9zM919.04 479.89v7.11h1.62v-7.11zM922.02 479.89v7.11h1.62v-7.11zM925 480.78v6.22h1.62v-6.22zM927.98 482.03v4.97h1.62v-4.97zM930.95 479.89v7.11h1.62v-7.11zM933.93 479.89v7.11h1.62v-7.11zM936.91 481.14v5.86h1.62v-5.86zM939.89 482.03v4.97h1.62v-4.97zM942.87 482.03v4.97h1.62v-4.97zM945.85 482.03v4.97h1.62v-4.97zM948.83 482.03v4.97h1.62v-4.97zM951.81 481.14v5.86h1.62v-5.86z"/><path fill="#e38278" d="M418.62 465.98v21.02h1.62v-21.02zM421.6 406.22v80.78h1.62v-80.78zM424.58 433.51v53.49h1.62v-53.49zM427.55 436.19v50.81h1.62v-50.81zM430.53 446v41h1.62v-41zM433.51 467.41v19.59h1.62v-19.59zM436.49 474.54v12.46h1.62v-12.46zM439.47 477.22v9.78h1.62v-9.78zM442.45 478.47v8.53h1.62v-8.53zM445.43 479.54v7.46h1.62v-7.46zM448.4 479.89v7.11h1.62v-7.11zM451.38 480.78v6.22h1.62v-6.22zM454.36 481.68v5.32h1.62v-5.32zM457.34 482.03v4.97h1.62v-4.97zM460.32 482.75v4.25h1.62v-4.25zM463.3 482.75v4.25h1.62v-4.25zM466.28 483.46v3.54h1.62v-3.54zM847.55 441.2v40.8h1.62v-40.8zM850.53 245.8v236.7h1.62v-236.7zM853.51 207.4v275.6h1.62v-275.6zM856.49 254.4v228.6h1.62v-228.6zM859.47 277v206h1.62v-206zM862.44 365.3v117.7h1.62v-117.7zM865.42 409.8v73.2h1.62v-73.2zM868.4 427.3v55.7h1.62v-55.7zM871.38 408.5v74.5h1.62v-74.5zM874.36 438.3v44.2h1.62v-44.2zM877.34 442.1v39.9h1.62v-39.9zM880.32 441.2v39.3h1.62v-39.3zM883.29 446.9v34.6h1.62v-34.6zM886.27 405.9v76.6h1.62v-76.6zM889.25 379.2v103.8h1.62v-103.8zM892.23 384.5v98.5h1.62v-98.5zM895.21 387.1v95.9h1.62v-95.9zM898.19 428.5v54.5h1.62v-54.5zM901.17 466v17h1.62v-17zM904.15 476v7h1.62v-7zM916.06 474.5v6.6h1.62v-6.6z"/>
<rect x="954" y="158.7" width="2.1" height="327" fill="#d4d4d8"/>
<g fill="#f4f4f4">
<rect x="25" y="484.7" width="939.2" height="2.45"/>
<rect x="954" y="158.65" width="10.3" height="2.5"/>
<rect x="954" y="267.05" width="10.3" height="2.5"/>
<rect x="954" y="376.25" width="10.3" height="2.5"/>
<rect x="954" y="213.2" width="5.1" height="2.3"/>
<rect x="954" y="321.5" width="5.1" height="2.3"/>
<rect x="954" y="430.8" width="5.1" height="2.3"/>
<rect x="25.05" y="486" width="2.5" height="9.9"/>
<rect x="322.95" y="486" width="2.5" height="9.9"/>
<rect x="620.85" y="486" width="2.5" height="9.9"/>
<rect x="918.55" y="486" width="2.5" height="9.9"/>
</g>
<g font-size="14.5" fill="#ececec">
<text x="25.6" y="518.2" textLength="32.8" lengthAdjust="spacingAndGlyphs">Jan 1</text>
<text x="303.9" y="518.2" textLength="40.5" lengthAdjust="spacingAndGlyphs">Apr 10</text>
<text x="604" y="518.2" textLength="36.2" lengthAdjust="spacingAndGlyphs">Jul 19</text>
<text x="898.9" y="518.2" textLength="42.5" lengthAdjust="spacingAndGlyphs">Oct 27</text>
<text x="973.5" y="166.3" textLength="25.4" lengthAdjust="spacingAndGlyphs">60K</text>
<text x="973.5" y="274.8" textLength="25.4" lengthAdjust="spacingAndGlyphs">40K</text>
<text x="973.5" y="383.2" textLength="25.4" lengthAdjust="spacingAndGlyphs">20K</text>
<text x="973.4" y="492" textLength="7.9" lengthAdjust="spacingAndGlyphs">0</text>
</g>
</svg>
<svg class="icons" width="1024" height="673" viewBox="0 0 1024 673" fill="none" stroke-linecap="round" stroke-linejoin="round">
<g stroke="#ececec" stroke-width="1.4" stroke-linecap="butt"><path d="M44.3 32.6V46.3H58.4M45.8 43.8L51 37.2L53.7 39.3L58 35.7"/></g>
<g stroke="#9a9aa6" stroke-width="1.4"><circle cx="236.9" cy="41" r="7.5"/></g>
<text x="235.1" y="44.8" font-family="Liberation Serif,serif" font-size="11" font-weight="bold" fill="#9a9aa6" stroke="none">i</text>
<g stroke="#b4b4c2" stroke-width="2.5"><path d="M259.1 37.1L264.5 42.6L269.9 37.1"/></g>
<g stroke="#a0a0a0" stroke-width="2" stroke-linecap="butt" stroke-linejoin="miter"><path d="M656.8 35.8L652.3 39.8L656.8 43.8M663.7 33.2L660 46.7M667 35.8L671.5 39.8L667 43.8"/></g>
<text x="697.8" y="44.6" font-family="Liberation Serif,serif" font-style="italic" font-size="22" fill="#a9aab8" stroke="#a9aab8" stroke-width="0.2" textLength="19" lengthAdjust="spacingAndGlyphs">fx</text>
<g stroke="#a4a4a4" stroke-width="1.7"><path d="M756.4 30.8V44.2M752.2 40.2L756.4 44.5L760.6 40.2M750 48H762.9"/></g>
<g stroke="#a6a6a6" stroke-width="1.7"><path d="M792.1 34.5H794.6L797.2 30.6H803.1L805.7 34.5H807.9Q810.1 34.5 810.1 36.7V46.7Q810.1 48.9 807.9 48.9H792.1Q789.9 48.9 789.9 46.7V36.7Q789.9 34.5 792.1 34.5Z"/><circle cx="799.9" cy="40.8" r="4.2"/></g>
<g stroke="#c2c2c2" stroke-width="1.5">
<path d="M130.35 107.80L134.30 111.90L138.25 107.80"/>
<path d="M221.25 107.80L225.20 111.90L229.15 107.80"/>
<path d="M327.95 107.80L331.90 111.90L335.85 107.80"/>
<path d="M435.25 107.80L439.20 111.90L443.15 107.80"/>
<path d="M862.25 107.80L866.20 111.90L870.15 107.80"/>
</g>
<g stroke="#b6b6c2" stroke-width="2.3"><path d="M941.80 108.20L946.80 113.30L951.80 108.20"/></g>
<g stroke="#92929c" stroke-width="1.7"><path d="M978.6 36.2L982.5 40L978.6 43.8"/></g>
</svg>
<div class="li" style="left:34.8px;top:546px"><i style="background:#d5d5d5"></i><span><span class="fit" style="letter-spacing:0.289px">Bridge</span></span></div>
<div class="li off" style="left:34.8px;top:568.1px"><i style="background:#656565"></i><span><span class="fit" style="letter-spacing:0.444px">Infrastructure</span></span></div>
<div class="li" style="left:34.8px;top:590.5px"><i style="background:#8cd0c8"></i><span><span class="fit" style="letter-spacing:0.132px">NFTs</span></span></div>
<div class="li" style="left:34.8px;top:613.2px"><i style="background:#d8d8d8"></i><span><span class="fit" style="letter-spacing:0.357px">Tokens</span></span></div>
<div class="li" style="left:230.2px;top:546px"><i style="background:#ead077"></i><span><span class="fit" style="letter-spacing:-0.166px">CeFi</span></span></div>
<div class="li" style="left:230.2px;top:568.1px"><i style="background:#e4847a"></i><span><span class="fit" style="letter-spacing:0.426px">Memecoin</span></span></div>
<div class="li" style="left:230.2px;top:590.5px"><i style="background:#e4847a"></i><span><span class="fit" style="letter-spacing:0.344px">Proof of Work</span></span></div>
<div class="li off" style="left:230.2px;top:613.2px"><i style="background:#646464"></i><span><span class="fit" style="letter-spacing:0.432px">Untagged Applications</span></span></div>
<div class="li" style="left:425.2px;top:546px"><i style="background:#8cd0c8"></i><span><span class="fit" style="display:inline-block;transform-origin:0 50%;transform:scaleX(0.9505)">DeFi</span></span></div>
<div class="li" style="left:425.2px;top:568.1px"><i style="background:#ead077"></i><span><span class="fit" style="display:inline-block;transform-origin:0 50%;transform:scaleX(0.9656)">MEV</span></span></div>
<div class="li off" style="left:425.2px;top:590.5px"><i style="background:#646464"></i><span><span class="fit" style="letter-spacing:0.160px">Social</span></span></div>
<div class="li off" style="left:425.2px;top:613.2px"><i style="background:#646464"></i><span><span class="fit" style="letter-spacing:0.236px">Wallet to Wallet</span></span></div>
<div class="li" style="left:620.5px;top:546px"><i style="background:#eab461"></i><span><span class="fit" style="letter-spacing:0.028px">Gaming</span></span></div>
<div class="li" style="left:620.5px;top:568.1px"><i style="background:#eab461"></i><span><span class="fit" style="letter-spacing:0.262px">NFT Apps</span></span></div>
<div class="li off" style="left:620.5px;top:590.5px"><i style="background:#646464"></i><span><span class="fit" style="letter-spacing:-0.070px">Spam</span></span></div>

</div>
</body></html>
